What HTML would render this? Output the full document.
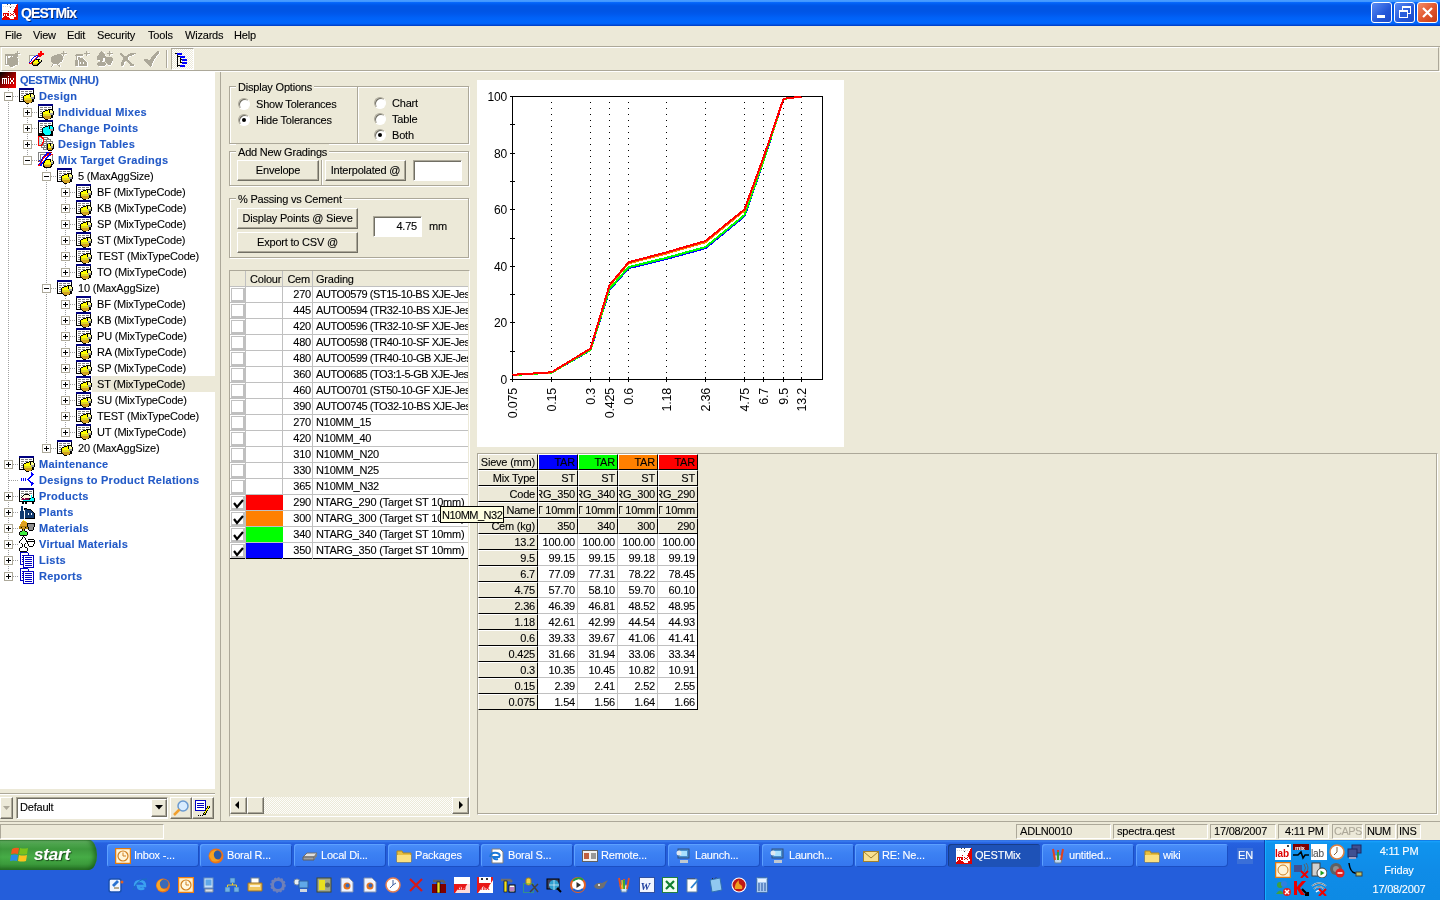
<!DOCTYPE html>
<html><head><meta charset="utf-8"><title>QESTMix</title>
<style>
*{margin:0;padding:0;box-sizing:border-box}
html,body{width:1440px;height:900px;overflow:hidden}
#wrap{position:absolute;left:0;top:0;width:1440px;height:900px;will-change:transform}
body{position:relative;background:#ece9d8;font-family:"Liberation Sans",sans-serif;font-size:11px;color:#000;line-height:16px;letter-spacing:-0.2px;-webkit-text-stroke:0.1px currentColor}
.a{position:absolute}
.t{position:absolute;white-space:nowrap}
/* title bar */
#title{left:0;top:0;width:1440px;height:26px;background:linear-gradient(#4a9dff 0,#3d95ff 2px,#0a6cff 2px,#005ef0 4px,#0055e5 6px,#0055e5 11px,#0058ec 14px,#0062f8 18px,#0066fd 22px,#0062f8 24px,#0046d0 25px,#0040c8 26px)}
.tbtn{top:2px;width:21px;height:21px;border:1px solid #fff;border-radius:3px;background:linear-gradient(135deg,#5a8cf5,#2457d8 60%,#1c4ac8)}
/* menu */
.menu{top:27px}
/* toolbar */
#tb{left:0;top:46px;width:1440px;height:26px;border-top:1px solid #aca899;border-bottom:1px solid #fff;}
#tbin{left:1px;top:47px;width:1438px;height:24px;border-top:1px solid #fff;border-left:1px solid #fff;border-right:1px solid #aca899;border-bottom:1px solid #aca899}
/* tree */
#tree{left:0;top:72px;width:215px;height:717px;background:#fff;overflow:hidden}
.tr{position:absolute;height:16px;white-space:nowrap;line-height:16px}
.b{font-weight:bold;color:#2259c6;letter-spacing:0.25px}
.exp{position:absolute;width:9px;height:9px;border:1px solid #aca899;background:#fff}
.exp::before{content:"";position:absolute;left:1px;top:3px;width:5px;height:1px;background:#000}
.exp.p::after{content:"";position:absolute;left:3px;top:1px;width:1px;height:5px;background:#000}
.dv{position:absolute;width:1px;background-image:linear-gradient(#a0a0a0 50%,transparent 50%);background-size:1px 2px}
.dh{position:absolute;height:1px;background-image:linear-gradient(90deg,#a0a0a0 50%,transparent 50%);background-size:2px 1px}
/* groups */
.grp{position:absolute;border:1px solid #aca899;box-shadow:inset 1px 1px 0 #fff,1px 1px 0 #fff}
.gl{position:absolute;background:#ece9d8;padding:0 2px;line-height:12px}
.btn{position:absolute;background:#ece9d8;border:1px solid;border-color:#fff #716f64 #716f64 #fff;box-shadow:inset -1px -1px 0 #aca899;text-align:center;line-height:18px}
.inp{position:absolute;background:#fff;border:1px solid;border-color:#aca899 #fff #fff #aca899;box-shadow:inset 1px 1px 0 #716f64}
.radio{position:absolute;width:12px;height:12px;border-radius:50%;background:#fff;border:1px solid;border-color:#aca899 #fff #fff #aca899;box-shadow:inset 1px 1px 0 #716f64}
.radio.on::after{content:"";position:absolute;left:3px;top:3px;width:4px;height:4px;border-radius:50%;background:#000}
/* grid */
#grid{left:229px;top:270px;width:240px;height:546px;border:1px solid #aca899;border-right-color:#fff;border-bottom-color:#fff;background:#ece9d8;overflow:hidden}
.gr{position:absolute;left:0;width:239px;height:16px}
.gc{position:absolute;top:0;height:16px;line-height:15px;white-space:nowrap;overflow:hidden}
/* table */
.fx{position:absolute;background:#ece9d8;border-top:1px solid #fff;border-left:1px solid #fff;border-right:1px solid #000;border-bottom:1px solid #000;display:flex;justify-content:flex-end;padding-right:2px;line-height:14px;white-space:nowrap;overflow:hidden}
.dc{position:absolute;background:#fff;border-right:1px solid #c0c0c0;border-bottom:1px solid #c0c0c0;display:flex;justify-content:flex-end;padding-right:2px;line-height:16px;white-space:nowrap;overflow:hidden}
.cl{flex:none}
/* status */
.sp{position:absolute;top:824px;height:15px;border:1px solid;border-color:#aca899 #fff #fff #aca899;line-height:13px;padding-left:4px;white-space:nowrap;overflow:hidden}
/* taskbar */
#task{left:0;top:840px;width:1440px;height:60px;background:linear-gradient(#3168d5 0,#3a80f3 1px,#2661e0 3px,#245edb 8px,#245edb 100%)}
.tk{position:absolute;top:844px;width:92px;height:23px;border-radius:3px;background:linear-gradient(#4b8ef9,#3c81f3 40%,#3576ee);box-shadow:inset 1px 1px 0 #5ca0ff,inset -1px -1px 0 #1b4fc3;color:#fff;font-size:11px;line-height:22px;padding-left:27px;white-space:nowrap;overflow:hidden}
.tk.act{background:#1e52b7;box-shadow:inset 1px 1px 0 #173e8a}
.ico{position:absolute}
</style></head><body><div id="wrap">

<!-- TITLE BAR -->
<div id="title" class="a"></div>
<svg class="a" style="left:2px;top:4px" width="16" height="16"><use href="#tk9"/></svg>
<div class="t" style="left:21px;top:3px;color:#fff;font-size:14px;font-weight:bold;line-height:20px;letter-spacing:-0.9px;text-shadow:1px 1px 0 #0a246a">QESTMix</div>
<div class="a tbtn" style="left:1371px"><div class="a" style="left:5px;top:12px;width:8px;height:3px;background:#fff"></div></div>
<div class="a tbtn" style="left:1394px"><div class="a" style="left:7px;top:3px;width:9px;height:8px;border:1px solid #fff;border-top-width:2px"></div><div class="a" style="left:4px;top:7px;width:9px;height:8px;border:1px solid #fff;border-top-width:2px;background:#2a5fdc"></div></div>
<div class="a tbtn" style="left:1417px;background:linear-gradient(135deg,#f08c6a,#e2582e 50%,#c63b13)"><svg class="a" style="left:3px;top:3px" width="13" height="13"><path d="M2 2 L11 11 M11 2 L2 11" stroke="#fff" stroke-width="2.2"/></svg></div>

<!-- MENU -->
<div class="t menu" style="left:5px">File</div>
<div class="t menu" style="left:33px">View</div>
<div class="t menu" style="left:67px">Edit</div>
<div class="t menu" style="left:97px">Security</div>
<div class="t menu" style="left:148px">Tools</div>
<div class="t menu" style="left:185px">Wizards</div>
<div class="t menu" style="left:234px">Help</div>

<!-- TOOLBAR -->
<div id="tb" class="a"></div>
<div id="tbin" class="a"></div>
<div class="a" style="left:171px;top:48px;width:23px;height:22px;border:1px solid;border-color:#aca899 #fff #fff #aca899;background:repeating-conic-gradient(#fff 0 25%,#ece9d8 0 50%) 0 0/2px 2px"></div>
<svg class="a" style="left:4px;top:50px" width="18" height="18"><use href="#tb_A"/></svg>
<svg class="a" style="left:27px;top:50px" width="18" height="18"><use href="#tb_B"/></svg>
<svg class="a" style="left:50px;top:50px" width="18" height="18"><use href="#tb_C"/></svg>
<svg class="a" style="left:73px;top:50px" width="18" height="18"><use href="#tb_D"/></svg>
<svg class="a" style="left:96px;top:50px" width="18" height="18"><use href="#tb_E"/></svg>
<svg class="a" style="left:119px;top:50px" width="18" height="18"><use href="#tb_F"/></svg>
<svg class="a" style="left:142px;top:50px" width="18" height="18"><use href="#tb_G"/></svg>
<svg class="a" style="left:172px;top:49px" width="20" height="20"><use href="#tb_tree"/></svg>
<div class="a" style="left:166px;top:50px;width:1px;height:18px;background:#aca899;box-shadow:1px 0 0 #fff"></div>
<svg width="0" height="0" style="position:absolute"><defs><symbol id="tb_A" viewBox="0 0 18 18" shape-rendering="crispEdges"><path d="M13 1h1v1h-1zM13 2h1v1h-1zM11 3h5v1h-5zM1 4h13v1h-13zM1 5h13v1h-13zM1 6h1v1h-1zM3 6h1v1h-1zM7 6h1v1h-1zM9 6h5v1h-5zM1 7h1v1h-1zM3 7h1v1h-1zM6 7h7v1h-7zM1 8h1v1h-1zM3 8h11v1h-11zM1 9h1v1h-1zM3 9h11v1h-11zM1 10h1v1h-1zM3 10h11v1h-11zM1 11h1v1h-1zM3 11h11v1h-11zM1 12h1v1h-1zM3 12h11v1h-11zM1 13h1v1h-1zM3 13h11v1h-11zM1 14h13v1h-13zM5 15h6v1h-6zM6 16h3v1h-3z" fill="#aca899"/><path d="M14 2h1v1h-1zM14 4h3v1h-3zM2 6h1v1h-1zM4 6h3v1h-3zM8 6h1v1h-1zM2 7h1v1h-1zM4 7h2v1h-2zM13 7h1v1h-1zM2 8h1v1h-1zM2 9h1v1h-1zM14 9h1v1h-1zM2 10h1v1h-1zM14 10h1v1h-1zM2 11h1v1h-1zM2 12h1v1h-1zM14 12h1v1h-1zM2 13h1v1h-1zM14 13h1v1h-1zM14 14h1v1h-1zM1 15h4v1h-4zM11 15h2v1h-2zM9 16h2v1h-2zM7 17h3v1h-3z" fill="#ffffff"/></symbol><symbol id="tb_B" viewBox="0 0 18 18" shape-rendering="crispEdges"><path d="M13 1h2v1h-2zM13 2h2v1h-2zM11 3h6v1h-6zM11 4h6v1h-6zM11 5h4v1h-4zM10 6h1v1h-1zM12 6h2v1h-2zM9 7h1v1h-1zM8 8h1v1h-1zM7 9h1v1h-1zM6 10h1v1h-1zM5 11h1v1h-1zM4 12h1v1h-1zM2 13h3v1h-3z" fill="#ff0000"/><path d="M2 5h7v1h-7zM2 6h1v1h-1zM2 7h1v1h-1zM2 8h1v1h-1zM2 9h1v1h-1zM2 10h1v1h-1zM2 11h1v1h-1z" fill="#aca899"/><path d="M9 5h2v1h-2zM7 6h2v1h-2zM11 6h1v1h-1zM6 7h1v1h-1zM10 7h1v1h-1zM5 8h1v1h-1zM9 8h1v1h-1zM4 9h1v1h-1zM8 9h1v1h-1zM4 10h1v1h-1zM3 11h1v1h-1zM2 12h1v1h-1z" fill="#0000ff"/><path d="M3 6h4v1h-4zM9 6h1v1h-1zM3 7h3v1h-3zM7 7h2v1h-2zM11 7h1v1h-1zM3 8h2v1h-2zM6 8h2v1h-2zM10 8h1v1h-1zM3 9h1v1h-1zM5 9h2v1h-2zM3 10h1v1h-1zM5 10h1v1h-1zM4 11h1v1h-1zM3 12h1v1h-1z" fill="#ffffff"/><path d="M9 9h4v1h-4zM7 10h1v1h-1zM11 10h1v1h-1zM14 10h1v1h-1zM6 11h1v1h-1zM11 11h1v1h-1zM14 11h1v1h-1zM5 12h1v1h-1zM12 12h2v1h-2zM5 13h1v1h-1zM11 13h2v1h-2zM5 14h1v1h-1zM10 14h2v1h-2zM6 15h5v1h-5z" fill="#000000"/><path d="M8 10h3v1h-3zM7 11h4v1h-4zM6 12h6v1h-6z" fill="#ffff00"/><path d="M12 10h2v1h-2z" fill="#ffff90"/><path d="M12 11h2v1h-2z" fill="#a0a0a0"/><path d="M6 13h5v1h-5z" fill="#e0d820"/><path d="M6 14h4v1h-4z" fill="#d0a020"/></symbol><symbol id="tb_C" viewBox="0 0 18 18" shape-rendering="crispEdges"><path d="M13 1h1v1h-1zM13 2h1v1h-1zM11 3h6v1h-6zM7 4h4v1h-4zM13 4h1v1h-1zM4 5h8v1h-8zM13 5h1v1h-1zM2 6h11v1h-11zM1 7h12v1h-12zM1 8h12v1h-12zM1 9h12v1h-12zM1 10h11v1h-11zM1 11h11v1h-11zM2 12h8v1h-8zM3 13h6v1h-6zM2 14h1v1h-1zM7 14h1v1h-1zM2 15h1v1h-1zM8 15h2v1h-2zM1 16h1v1h-1zM9 16h1v1h-1z" fill="#aca899"/><path d="M15 2h1v1h-1zM15 4h2v1h-2zM12 5h1v1h-1zM14 5h1v1h-1zM13 7h1v1h-1zM13 9h1v1h-1zM12 10h1v1h-1zM12 11h1v1h-1zM10 12h2v1h-2zM9 13h1v1h-1zM3 14h4v1h-4zM8 14h1v1h-1zM3 15h1v1h-1zM10 15h1v1h-1zM2 16h1v1h-1zM10 16h1v1h-1z" fill="#ffffff"/></symbol><symbol id="tb_D" viewBox="0 0 18 18" shape-rendering="crispEdges"><path d="M13 1h1v1h-1zM13 2h1v1h-1zM11 3h6v1h-6zM3 4h7v1h-7zM13 4h1v1h-1zM2 5h8v1h-8zM13 5h1v1h-1zM3 6h1v1h-1zM3 7h1v1h-1zM5 7h2v1h-2zM3 8h1v1h-1zM5 8h5v1h-5zM3 9h1v1h-1zM5 9h6v1h-6zM2 10h3v1h-3zM6 10h6v1h-6zM2 11h3v1h-3zM6 11h7v1h-7zM2 12h3v1h-3zM6 12h1v1h-1zM8 12h2v1h-2zM11 12h3v1h-3zM2 13h3v1h-3zM6 13h1v1h-1zM8 13h2v1h-2zM11 13h3v1h-3zM2 14h3v1h-3zM6 14h8v1h-8zM2 15h3v1h-3zM6 15h8v1h-8z" fill="#aca899"/><path d="M15 2h1v1h-1zM15 4h2v1h-2zM10 5h1v1h-1zM14 5h1v1h-1zM4 6h6v1h-6zM4 7h1v1h-1zM7 7h1v1h-1zM4 8h1v1h-1zM10 8h1v1h-1zM4 9h1v1h-1zM11 9h1v1h-1zM5 10h1v1h-1zM12 10h1v1h-1zM5 11h1v1h-1zM13 11h1v1h-1zM5 12h1v1h-1zM7 12h1v1h-1zM10 12h1v1h-1zM14 12h1v1h-1zM5 13h1v1h-1zM7 13h1v1h-1zM10 13h1v1h-1zM14 13h1v1h-1zM5 14h1v1h-1zM14 14h1v1h-1zM5 15h1v1h-1zM14 15h1v1h-1zM3 16h12v1h-12z" fill="#ffffff"/></symbol><symbol id="tb_E" viewBox="0 0 18 18" shape-rendering="crispEdges"><path d="M5 1h1v1h-1zM13 1h1v1h-1zM4 2h3v1h-3zM13 2h1v1h-1zM3 3h5v1h-5zM11 3h6v1h-6zM3 4h6v1h-6zM13 4h1v1h-1zM2 5h7v1h-7zM13 5h1v1h-1zM1 6h9v1h-9zM1 7h15v1h-15zM1 8h6v1h-6zM9 8h8v1h-8zM1 9h6v1h-6zM9 9h8v1h-8zM4 10h3v1h-3zM9 10h8v1h-8zM4 11h2v1h-2zM9 11h7v1h-7zM2 12h7v1h-7zM10 12h6v1h-6zM1 13h9v1h-9zM11 13h4v1h-4zM1 14h9v1h-9zM12 14h3v1h-3zM2 15h7v1h-7z" fill="#aca899"/><path d="M8 2h1v1h-1zM15 2h1v1h-1zM15 4h2v1h-2zM9 5h1v1h-1zM14 5h1v1h-1zM7 8h2v1h-2zM7 9h2v1h-2zM2 10h2v1h-2zM7 10h2v1h-2zM6 11h2v1h-2zM16 11h1v1h-1zM16 12h1v1h-1zM15 13h1v1h-1zM10 14h1v1h-1zM15 14h1v1h-1zM9 15h1v1h-1zM12 15h3v1h-3zM3 16h6v1h-6z" fill="#ffffff"/></symbol><symbol id="tb_F" viewBox="0 0 18 18" shape-rendering="crispEdges"><path d="M1 3h2v1h-2zM11 3h6v1h-6zM1 4h3v1h-3zM9 4h6v1h-6zM2 5h3v1h-3zM8 5h5v1h-5zM3 6h7v1h-7zM4 7h5v1h-5zM4 8h5v1h-5zM4 9h5v1h-5zM3 10h7v1h-7zM3 11h3v1h-3zM8 11h3v1h-3zM2 12h3v1h-3zM9 12h3v1h-3zM2 13h3v1h-3zM10 13h3v1h-3zM2 14h3v1h-3zM11 14h4v1h-4zM2 15h2v1h-2zM11 15h4v1h-4z" fill="#aca899"/><path d="M15 4h1v1h-1zM13 5h2v1h-2zM10 6h2v1h-2zM9 7h1v1h-1zM9 8h1v1h-1zM9 9h1v1h-1zM5 12h2v1h-2zM5 13h1v1h-1zM5 14h1v1h-1zM4 15h1v1h-1zM15 15h1v1h-1zM3 16h2v1h-2zM11 16h4v1h-4z" fill="#ffffff"/></symbol><symbol id="tb_G" viewBox="0 0 18 18" shape-rendering="crispEdges"><path d="M15 1h2v1h-2zM14 2h3v1h-3zM13 3h4v1h-4zM12 4h4v1h-4zM11 5h4v1h-4zM10 6h4v1h-4zM9 7h5v1h-5zM9 8h4v1h-4zM2 9h4v1h-4zM8 9h4v1h-4zM2 10h10v1h-10zM3 11h8v1h-8zM4 12h7v1h-7zM5 13h5v1h-5zM6 14h4v1h-4zM7 15h3v1h-3zM8 16h1v1h-1z" fill="#aca899"/><path d="M17 2h1v1h-1zM17 3h1v1h-1zM16 4h1v1h-1zM15 5h1v1h-1zM14 6h1v1h-1zM14 7h1v1h-1zM13 8h1v1h-1zM12 9h1v1h-1zM12 10h1v1h-1zM11 11h1v1h-1zM11 12h1v1h-1zM10 13h1v1h-1zM10 14h1v1h-1zM10 15h1v1h-1zM9 16h1v1h-1z" fill="#ffffff"/></symbol><symbol id="tb_tree" viewBox="0 0 20 20" shape-rendering="crispEdges"><path d="M3 4h2v1h-2zM5 6h1v1h-1zM5 7h3v1h-3zM5 8h1v1h-1zM5 9h1v1h-1zM8 9h1v1h-1zM5 10h1v1h-1zM8 10h2v1h-2zM5 11h1v1h-1zM8 11h1v1h-1zM5 12h1v1h-1zM8 12h1v1h-1zM5 13h1v1h-1zM8 13h2v1h-2zM5 14h1v1h-1zM5 15h1v1h-1zM5 16h3v1h-3zM5 17h1v1h-1z" fill="#000000"/><path d="M5 4h5v1h-5zM5 5h5v1h-5zM8 7h5v1h-5zM8 8h5v1h-5zM10 10h5v1h-5zM10 11h5v1h-5zM10 13h5v1h-5zM10 14h5v1h-5zM8 16h5v1h-5zM8 17h5v1h-5z" fill="#0000ff"/></symbol></defs></svg>

<!-- TREE -->
<div id="tree" class="a">
<div class="dv" style="left:8px;top:16px;height:488px"></div>
<div class="dv" style="left:27px;top:32px;height:56px"></div>
<div class="dv" style="left:46px;top:96px;height:280px"></div>
<div class="dv" style="left:65px;top:112px;height:88px"></div>
<div class="dv" style="left:65px;top:224px;height:136px"></div>
<div class="dh" style="left:9px;top:24px;width:10px"></div>
<div class="dh" style="left:28px;top:40px;width:10px"></div>
<div class="dh" style="left:28px;top:56px;width:10px"></div>
<div class="dh" style="left:28px;top:72px;width:10px"></div>
<div class="dh" style="left:28px;top:88px;width:10px"></div>
<div class="dh" style="left:47px;top:104px;width:10px"></div>
<div class="dh" style="left:66px;top:120px;width:10px"></div>
<div class="dh" style="left:66px;top:136px;width:10px"></div>
<div class="dh" style="left:66px;top:152px;width:10px"></div>
<div class="dh" style="left:66px;top:168px;width:10px"></div>
<div class="dh" style="left:66px;top:184px;width:10px"></div>
<div class="dh" style="left:66px;top:200px;width:10px"></div>
<div class="dh" style="left:47px;top:216px;width:10px"></div>
<div class="dh" style="left:66px;top:232px;width:10px"></div>
<div class="dh" style="left:66px;top:248px;width:10px"></div>
<div class="dh" style="left:66px;top:264px;width:10px"></div>
<div class="dh" style="left:66px;top:280px;width:10px"></div>
<div class="dh" style="left:66px;top:296px;width:10px"></div>
<div class="dh" style="left:66px;top:312px;width:10px"></div>
<div class="dh" style="left:66px;top:328px;width:10px"></div>
<div class="dh" style="left:66px;top:344px;width:10px"></div>
<div class="dh" style="left:66px;top:360px;width:10px"></div>
<div class="dh" style="left:47px;top:376px;width:10px"></div>
<div class="dh" style="left:9px;top:392px;width:10px"></div>
<div class="dh" style="left:9px;top:408px;width:10px"></div>
<div class="dh" style="left:9px;top:424px;width:10px"></div>
<div class="dh" style="left:9px;top:440px;width:10px"></div>
<div class="dh" style="left:9px;top:456px;width:10px"></div>
<div class="dh" style="left:9px;top:472px;width:10px"></div>
<div class="dh" style="left:9px;top:488px;width:10px"></div>
<div class="dh" style="left:9px;top:504px;width:10px"></div>
<svg class="a" style="left:0px;top:0px" width="16" height="16"><use href="#i_mix"/></svg>
<div class="tr b" style="left:20px;top:0px;letter-spacing:-0.3px">QESTMix (NHU)</div>
<div class="exp" style="left:4px;top:20px"></div>
<svg class="a" style="left:19px;top:16px" width="16" height="16"><use href="#i_db"/></svg>
<div class="tr b" style="left:39px;top:16px">Design</div>
<div class="exp p" style="left:23px;top:36px"></div>
<svg class="a" style="left:38px;top:32px" width="16" height="16"><use href="#i_db"/></svg>
<div class="tr b" style="left:58px;top:32px">Individual Mixes</div>
<div class="exp p" style="left:23px;top:52px"></div>
<svg class="a" style="left:38px;top:48px" width="16" height="16"><use href="#i_dbc"/></svg>
<div class="tr b" style="left:58px;top:48px">Change Points</div>
<div class="exp p" style="left:23px;top:68px"></div>
<svg class="a" style="left:38px;top:64px" width="16" height="16"><use href="#i_dt"/></svg>
<div class="tr b" style="left:58px;top:64px">Design Tables</div>
<div class="exp" style="left:23px;top:84px"></div>
<svg class="a" style="left:38px;top:80px" width="16" height="16"><use href="#i_mtg"/></svg>
<div class="tr b" style="left:58px;top:80px">Mix Target Gradings</div>
<div class="exp" style="left:42px;top:100px"></div>
<svg class="a" style="left:57px;top:96px" width="16" height="16"><use href="#i_db"/></svg>
<div class="tr" style="left:78px;top:96px">5 (MaxAggSize)</div>
<div class="exp p" style="left:61px;top:116px"></div>
<svg class="a" style="left:76px;top:112px" width="16" height="16"><use href="#i_db"/></svg>
<div class="tr" style="left:97px;top:112px">BF (MixTypeCode)</div>
<div class="exp p" style="left:61px;top:132px"></div>
<svg class="a" style="left:76px;top:128px" width="16" height="16"><use href="#i_db"/></svg>
<div class="tr" style="left:97px;top:128px">KB (MixTypeCode)</div>
<div class="exp p" style="left:61px;top:148px"></div>
<svg class="a" style="left:76px;top:144px" width="16" height="16"><use href="#i_db"/></svg>
<div class="tr" style="left:97px;top:144px">SP (MixTypeCode)</div>
<div class="exp p" style="left:61px;top:164px"></div>
<svg class="a" style="left:76px;top:160px" width="16" height="16"><use href="#i_db"/></svg>
<div class="tr" style="left:97px;top:160px">ST (MixTypeCode)</div>
<div class="exp p" style="left:61px;top:180px"></div>
<svg class="a" style="left:76px;top:176px" width="16" height="16"><use href="#i_db"/></svg>
<div class="tr" style="left:97px;top:176px">TEST (MixTypeCode)</div>
<div class="exp p" style="left:61px;top:196px"></div>
<svg class="a" style="left:76px;top:192px" width="16" height="16"><use href="#i_db"/></svg>
<div class="tr" style="left:97px;top:192px">TO (MixTypeCode)</div>
<div class="exp" style="left:42px;top:212px"></div>
<svg class="a" style="left:57px;top:208px" width="16" height="16"><use href="#i_db"/></svg>
<div class="tr" style="left:78px;top:208px">10 (MaxAggSize)</div>
<div class="exp p" style="left:61px;top:228px"></div>
<svg class="a" style="left:76px;top:224px" width="16" height="16"><use href="#i_db"/></svg>
<div class="tr" style="left:97px;top:224px">BF (MixTypeCode)</div>
<div class="exp p" style="left:61px;top:244px"></div>
<svg class="a" style="left:76px;top:240px" width="16" height="16"><use href="#i_db"/></svg>
<div class="tr" style="left:97px;top:240px">KB (MixTypeCode)</div>
<div class="exp p" style="left:61px;top:260px"></div>
<svg class="a" style="left:76px;top:256px" width="16" height="16"><use href="#i_db"/></svg>
<div class="tr" style="left:97px;top:256px">PU (MixTypeCode)</div>
<div class="exp p" style="left:61px;top:276px"></div>
<svg class="a" style="left:76px;top:272px" width="16" height="16"><use href="#i_db"/></svg>
<div class="tr" style="left:97px;top:272px">RA (MixTypeCode)</div>
<div class="exp p" style="left:61px;top:292px"></div>
<svg class="a" style="left:76px;top:288px" width="16" height="16"><use href="#i_db"/></svg>
<div class="tr" style="left:97px;top:288px">SP (MixTypeCode)</div>
<div class="exp p" style="left:61px;top:308px"></div>
<svg class="a" style="left:76px;top:304px" width="16" height="16"><use href="#i_db"/></svg>
<div class="a" style="left:92px;top:304px;width:123px;height:16px;background:#ece9d8"></div>
<div class="tr" style="left:97px;top:304px">ST (MixTypeCode)</div>
<div class="exp p" style="left:61px;top:324px"></div>
<svg class="a" style="left:76px;top:320px" width="16" height="16"><use href="#i_db"/></svg>
<div class="tr" style="left:97px;top:320px">SU (MixTypeCode)</div>
<div class="exp p" style="left:61px;top:340px"></div>
<svg class="a" style="left:76px;top:336px" width="16" height="16"><use href="#i_db"/></svg>
<div class="tr" style="left:97px;top:336px">TEST (MixTypeCode)</div>
<div class="exp p" style="left:61px;top:356px"></div>
<svg class="a" style="left:76px;top:352px" width="16" height="16"><use href="#i_db"/></svg>
<div class="tr" style="left:97px;top:352px">UT (MixTypeCode)</div>
<div class="exp p" style="left:42px;top:372px"></div>
<svg class="a" style="left:57px;top:368px" width="16" height="16"><use href="#i_db"/></svg>
<div class="tr" style="left:78px;top:368px">20 (MaxAggSize)</div>
<div class="exp p" style="left:4px;top:388px"></div>
<svg class="a" style="left:19px;top:384px" width="16" height="16"><use href="#i_db"/></svg>
<div class="tr b" style="left:39px;top:384px">Maintenance</div>
<svg class="a" style="left:19px;top:400px" width="16" height="16"><use href="#i_rel"/></svg>
<div class="tr b" style="left:39px;top:400px">Designs to Product Relations</div>
<div class="exp p" style="left:4px;top:420px"></div>
<svg class="a" style="left:19px;top:416px" width="16" height="16"><use href="#i_prod"/></svg>
<div class="tr b" style="left:39px;top:416px">Products</div>
<div class="exp p" style="left:4px;top:436px"></div>
<svg class="a" style="left:19px;top:432px" width="16" height="16"><use href="#i_plant"/></svg>
<div class="tr b" style="left:39px;top:432px">Plants</div>
<div class="exp p" style="left:4px;top:452px"></div>
<svg class="a" style="left:19px;top:448px" width="16" height="16"><use href="#i_mat"/></svg>
<div class="tr b" style="left:39px;top:448px">Materials</div>
<div class="exp p" style="left:4px;top:468px"></div>
<svg class="a" style="left:19px;top:464px" width="16" height="16"><use href="#i_vmat"/></svg>
<div class="tr b" style="left:39px;top:464px">Virtual Materials</div>
<div class="exp p" style="left:4px;top:484px"></div>
<svg class="a" style="left:19px;top:480px" width="16" height="16"><use href="#i_list"/></svg>
<div class="tr b" style="left:39px;top:480px">Lists</div>
<div class="exp p" style="left:4px;top:500px"></div>
<svg class="a" style="left:19px;top:496px" width="16" height="16"><use href="#i_list"/></svg>
<div class="tr b" style="left:39px;top:496px">Reports</div>
</div>



<!-- SPLITTER -->
<div class="a" style="left:220px;top:72px;width:1px;height:749px;background:#aca899"></div>
<div class="a" style="left:0;top:821px;width:1440px;height:1px;background:#aca899"></div>

<!-- Display Options -->
<div class="grp" style="left:229px;top:86px;width:240px;height:58px"></div>
<div class="a" style="left:357px;top:87px;width:1px;height:56px;background:#aca899;box-shadow:1px 0 0 #fff"></div>
<div class="gl t" style="left:236px;top:79px;line-height:16px">Display Options</div>
<div class="radio" style="left:238px;top:98px"></div><div class="t" style="left:256px;top:96px">Show Tolerances</div>
<div class="radio on" style="left:238px;top:114px"></div><div class="t" style="left:256px;top:112px">Hide Tolerances</div>
<div class="radio" style="left:374px;top:97px"></div><div class="t" style="left:392px;top:95px">Chart</div>
<div class="radio" style="left:374px;top:113px"></div><div class="t" style="left:392px;top:111px">Table</div>
<div class="radio on" style="left:374px;top:129px"></div><div class="t" style="left:392px;top:127px">Both</div>
<!-- Add New Gradings -->
<div class="grp" style="left:229px;top:151px;width:240px;height:35px"></div>
<div class="a" style="left:321px;top:152px;width:1px;height:33px;background:#aca899;box-shadow:1px 0 0 #fff"></div>
<div class="gl t" style="left:236px;top:144px;line-height:16px">Add New Gradings</div>
<div class="btn" style="left:237px;top:160px;width:82px;height:21px">Envelope</div>
<div class="btn" style="left:325px;top:160px;width:81px;height:21px">Interpolated @</div>
<div class="inp" style="left:413px;top:160px;width:49px;height:21px"></div>
<!-- % Passing -->
<div class="grp" style="left:229px;top:198px;width:240px;height:60px"></div>
<div class="gl t" style="left:236px;top:191px;line-height:16px">% Passing vs Cement</div>
<div class="btn" style="left:237px;top:208px;width:121px;height:21px">Display Points @ Sieve</div>
<div class="btn" style="left:237px;top:232px;width:121px;height:21px">Export to CSV @</div>
<div class="inp" style="left:373px;top:216px;width:49px;height:21px;text-align:right;padding-right:4px;line-height:18px">4.75</div>
<div class="t" style="left:429px;top:218px">mm</div>


<div class="a" style="left:229px;top:270px;width:241px;height:547px;border:1px solid #aca899;border-right-color:#fff;border-bottom-color:#fff;background:#ece9d8"></div>
<div class="a" style="left:230px;top:271px;width:239px;height:545px;border:1px solid #716f64;border-right-color:#ece9d8;border-bottom-color:#ece9d8;border-width:0"></div>
<div class="a" style="left:230px;top:271px;width:238px;height:15px;background:#ece9d8"></div>
<div class="a" style="left:230px;top:287px;width:238px;height:271px;background:#fff"></div>
<div class="a" style="left:230px;top:286px;width:238px;height:1px;background:#c0c0c0"></div>
<div class="a" style="left:230px;top:302px;width:238px;height:1px;background:#c0c0c0"></div>
<div class="a" style="left:230px;top:318px;width:238px;height:1px;background:#c0c0c0"></div>
<div class="a" style="left:230px;top:334px;width:238px;height:1px;background:#c0c0c0"></div>
<div class="a" style="left:230px;top:350px;width:238px;height:1px;background:#c0c0c0"></div>
<div class="a" style="left:230px;top:366px;width:238px;height:1px;background:#c0c0c0"></div>
<div class="a" style="left:230px;top:382px;width:238px;height:1px;background:#c0c0c0"></div>
<div class="a" style="left:230px;top:398px;width:238px;height:1px;background:#c0c0c0"></div>
<div class="a" style="left:230px;top:414px;width:238px;height:1px;background:#c0c0c0"></div>
<div class="a" style="left:230px;top:430px;width:238px;height:1px;background:#c0c0c0"></div>
<div class="a" style="left:230px;top:446px;width:238px;height:1px;background:#c0c0c0"></div>
<div class="a" style="left:230px;top:462px;width:238px;height:1px;background:#c0c0c0"></div>
<div class="a" style="left:230px;top:478px;width:238px;height:1px;background:#c0c0c0"></div>
<div class="a" style="left:230px;top:494px;width:238px;height:1px;background:#c0c0c0"></div>
<div class="a" style="left:230px;top:510px;width:238px;height:1px;background:#c0c0c0"></div>
<div class="a" style="left:230px;top:526px;width:238px;height:1px;background:#c0c0c0"></div>
<div class="a" style="left:230px;top:542px;width:238px;height:1px;background:#c0c0c0"></div>
<div class="a" style="left:230px;top:558px;width:238px;height:1px;background:#c0c0c0"></div>
<div class="a" style="left:230px;top:558px;width:238px;height:1px;background:#000"></div>
<div class="a" style="left:245px;top:271px;width:1px;height:288px;background:#c0c0c0"></div>
<div class="a" style="left:282px;top:271px;width:1px;height:288px;background:#c0c0c0"></div>
<div class="a" style="left:312px;top:271px;width:1px;height:288px;background:#c0c0c0"></div>
<div class="t" style="left:250px;top:271px">Colour</div>
<div class="t" style="left:282px;top:271px;width:28px;text-align:right">Cem</div>
<div class="t" style="left:316px;top:271px">Grading</div>
<div class="a" style="left:231px;top:288px;width:14px;height:14px;border:1px solid #c0c0c0;border-right-width:2px;border-bottom-width:2px;background:#fff"></div>
<div class="t" style="left:283px;top:286px;width:28px;text-align:right">270</div>
<div class="t" style="left:316px;top:286px;width:152px;overflow:hidden;letter-spacing:-0.45px;">AUTO0579 (ST15-10-BS XJE-Jesse)</div>
<div class="a" style="left:231px;top:304px;width:14px;height:14px;border:1px solid #c0c0c0;border-right-width:2px;border-bottom-width:2px;background:#fff"></div>
<div class="t" style="left:283px;top:302px;width:28px;text-align:right">445</div>
<div class="t" style="left:316px;top:302px;width:152px;overflow:hidden;letter-spacing:-0.45px;">AUTO0594 (TR32-10-BS XJE-Jesse)</div>
<div class="a" style="left:231px;top:320px;width:14px;height:14px;border:1px solid #c0c0c0;border-right-width:2px;border-bottom-width:2px;background:#fff"></div>
<div class="t" style="left:283px;top:318px;width:28px;text-align:right">420</div>
<div class="t" style="left:316px;top:318px;width:152px;overflow:hidden;letter-spacing:-0.45px;">AUTO0596 (TR32-10-SF XJE-Jesse)</div>
<div class="a" style="left:231px;top:336px;width:14px;height:14px;border:1px solid #c0c0c0;border-right-width:2px;border-bottom-width:2px;background:#fff"></div>
<div class="t" style="left:283px;top:334px;width:28px;text-align:right">480</div>
<div class="t" style="left:316px;top:334px;width:152px;overflow:hidden;letter-spacing:-0.45px;">AUTO0598 (TR40-10-SF XJE-Jesse)</div>
<div class="a" style="left:231px;top:352px;width:14px;height:14px;border:1px solid #c0c0c0;border-right-width:2px;border-bottom-width:2px;background:#fff"></div>
<div class="t" style="left:283px;top:350px;width:28px;text-align:right">480</div>
<div class="t" style="left:316px;top:350px;width:152px;overflow:hidden;letter-spacing:-0.45px;">AUTO0599 (TR40-10-GB XJE-Jesse)</div>
<div class="a" style="left:231px;top:368px;width:14px;height:14px;border:1px solid #c0c0c0;border-right-width:2px;border-bottom-width:2px;background:#fff"></div>
<div class="t" style="left:283px;top:366px;width:28px;text-align:right">360</div>
<div class="t" style="left:316px;top:366px;width:152px;overflow:hidden;letter-spacing:-0.45px;">AUTO0685 (TO3:1-5-GB XJE-Jesse)</div>
<div class="a" style="left:231px;top:384px;width:14px;height:14px;border:1px solid #c0c0c0;border-right-width:2px;border-bottom-width:2px;background:#fff"></div>
<div class="t" style="left:283px;top:382px;width:28px;text-align:right">460</div>
<div class="t" style="left:316px;top:382px;width:152px;overflow:hidden;letter-spacing:-0.45px;">AUTO0701 (ST50-10-GF XJE-Jesse)</div>
<div class="a" style="left:231px;top:400px;width:14px;height:14px;border:1px solid #c0c0c0;border-right-width:2px;border-bottom-width:2px;background:#fff"></div>
<div class="t" style="left:283px;top:398px;width:28px;text-align:right">390</div>
<div class="t" style="left:316px;top:398px;width:152px;overflow:hidden;letter-spacing:-0.45px;">AUTO0745 (TO32-10-BS XJE-Jesse)</div>
<div class="a" style="left:231px;top:416px;width:14px;height:14px;border:1px solid #c0c0c0;border-right-width:2px;border-bottom-width:2px;background:#fff"></div>
<div class="t" style="left:283px;top:414px;width:28px;text-align:right">270</div>
<div class="t" style="left:316px;top:414px;width:152px;overflow:hidden;">N10MM_15</div>
<div class="a" style="left:231px;top:432px;width:14px;height:14px;border:1px solid #c0c0c0;border-right-width:2px;border-bottom-width:2px;background:#fff"></div>
<div class="t" style="left:283px;top:430px;width:28px;text-align:right">420</div>
<div class="t" style="left:316px;top:430px;width:152px;overflow:hidden;">N10MM_40</div>
<div class="a" style="left:231px;top:448px;width:14px;height:14px;border:1px solid #c0c0c0;border-right-width:2px;border-bottom-width:2px;background:#fff"></div>
<div class="t" style="left:283px;top:446px;width:28px;text-align:right">310</div>
<div class="t" style="left:316px;top:446px;width:152px;overflow:hidden;">N10MM_N20</div>
<div class="a" style="left:231px;top:464px;width:14px;height:14px;border:1px solid #c0c0c0;border-right-width:2px;border-bottom-width:2px;background:#fff"></div>
<div class="t" style="left:283px;top:462px;width:28px;text-align:right">330</div>
<div class="t" style="left:316px;top:462px;width:152px;overflow:hidden;">N10MM_N25</div>
<div class="a" style="left:231px;top:480px;width:14px;height:14px;border:1px solid #c0c0c0;border-right-width:2px;border-bottom-width:2px;background:#fff"></div>
<div class="t" style="left:283px;top:478px;width:28px;text-align:right">365</div>
<div class="t" style="left:316px;top:478px;width:152px;overflow:hidden;">N10MM_N32</div>
<div class="a" style="left:231px;top:496px;width:14px;height:14px;border:1px solid #c0c0c0;border-right-width:2px;border-bottom-width:2px;background:#fff"></div>
<svg class="a" style="left:233px;top:498px" width="11" height="11"><path d="M1 5 L4 9 L10 2" stroke="#000" stroke-width="2.2" fill="none"/></svg>
<div class="a" style="left:246px;top:495px;width:37px;height:15px;background:#ff0000"></div>
<div class="t" style="left:283px;top:494px;width:28px;text-align:right">290</div>
<div class="t" style="left:316px;top:494px;width:152px;overflow:hidden;">NTARG_290 (Target ST 10mm)</div>
<div class="a" style="left:231px;top:512px;width:14px;height:14px;border:1px solid #c0c0c0;border-right-width:2px;border-bottom-width:2px;background:#fff"></div>
<svg class="a" style="left:233px;top:514px" width="11" height="11"><path d="M1 5 L4 9 L10 2" stroke="#000" stroke-width="2.2" fill="none"/></svg>
<div class="a" style="left:246px;top:511px;width:37px;height:15px;background:#ff8000"></div>
<div class="t" style="left:283px;top:510px;width:28px;text-align:right">300</div>
<div class="t" style="left:316px;top:510px;width:152px;overflow:hidden;">NTARG_300 (Target ST 10mm)</div>
<div class="a" style="left:231px;top:528px;width:14px;height:14px;border:1px solid #c0c0c0;border-right-width:2px;border-bottom-width:2px;background:#fff"></div>
<svg class="a" style="left:233px;top:530px" width="11" height="11"><path d="M1 5 L4 9 L10 2" stroke="#000" stroke-width="2.2" fill="none"/></svg>
<div class="a" style="left:246px;top:527px;width:37px;height:15px;background:#00ff00"></div>
<div class="t" style="left:283px;top:526px;width:28px;text-align:right">340</div>
<div class="t" style="left:316px;top:526px;width:152px;overflow:hidden;">NTARG_340 (Target ST 10mm)</div>
<div class="a" style="left:231px;top:544px;width:14px;height:14px;border:1px solid #c0c0c0;border-right-width:2px;border-bottom-width:2px;background:#fff"></div>
<svg class="a" style="left:233px;top:546px" width="11" height="11"><path d="M1 5 L4 9 L10 2" stroke="#000" stroke-width="2.2" fill="none"/></svg>
<div class="a" style="left:246px;top:543px;width:37px;height:15px;background:#0000ff"></div>
<div class="t" style="left:283px;top:542px;width:28px;text-align:right">350</div>
<div class="t" style="left:316px;top:542px;width:152px;overflow:hidden;">NTARG_350 (Target ST 10mm)</div>
<div class="a" style="left:230px;top:797px;width:238px;height:17px;background:repeating-conic-gradient(#fdfdfb 0 25%,#ece9d8 0 50%) 0 0/2px 2px"></div>
<div class="btn" style="left:230px;top:797px;width:17px;height:17px"></div>
<svg class="a" style="left:235px;top:801px" width="6" height="9"><path d="M4 0 L0 4 L4 8 Z" fill="#000"/></svg>
<div class="btn" style="left:452px;top:797px;width:17px;height:17px"></div>
<svg class="a" style="left:459px;top:801px" width="6" height="9"><path d="M0 0 L4 4 L0 8 Z" fill="#000"/></svg>
<div class="btn" style="left:247px;top:797px;width:17px;height:17px"></div>

<svg class="a" style="left:477px;top:80px" width="367" height="367" viewBox="477 80 367 367" font-family="Liberation Sans" font-size="11">
<rect x="477" y="80" width="367" height="367" fill="#fff"/>
<path d="M551 102h1v1h-1zM551 108h1v1h-1zM551 114h1v1h-1zM551 120h1v1h-1zM551 126h1v1h-1zM551 132h1v1h-1zM551 138h1v1h-1zM551 144h1v1h-1zM551 150h1v1h-1zM551 156h1v1h-1zM551 162h1v1h-1zM551 168h1v1h-1zM551 174h1v1h-1zM551 180h1v1h-1zM551 186h1v1h-1zM551 192h1v1h-1zM551 198h1v1h-1zM551 204h1v1h-1zM551 210h1v1h-1zM551 216h1v1h-1zM551 222h1v1h-1zM551 228h1v1h-1zM551 234h1v1h-1zM551 240h1v1h-1zM551 246h1v1h-1zM551 252h1v1h-1zM551 258h1v1h-1zM551 264h1v1h-1zM551 270h1v1h-1zM551 276h1v1h-1zM551 282h1v1h-1zM551 288h1v1h-1zM551 294h1v1h-1zM551 300h1v1h-1zM551 306h1v1h-1zM551 312h1v1h-1zM551 318h1v1h-1zM551 324h1v1h-1zM551 330h1v1h-1zM551 336h1v1h-1zM551 342h1v1h-1zM551 348h1v1h-1zM551 354h1v1h-1zM551 360h1v1h-1zM551 366h1v1h-1zM551 372h1v1h-1zM551 378h1v1h-1zM590 102h1v1h-1zM590 108h1v1h-1zM590 114h1v1h-1zM590 120h1v1h-1zM590 126h1v1h-1zM590 132h1v1h-1zM590 138h1v1h-1zM590 144h1v1h-1zM590 150h1v1h-1zM590 156h1v1h-1zM590 162h1v1h-1zM590 168h1v1h-1zM590 174h1v1h-1zM590 180h1v1h-1zM590 186h1v1h-1zM590 192h1v1h-1zM590 198h1v1h-1zM590 204h1v1h-1zM590 210h1v1h-1zM590 216h1v1h-1zM590 222h1v1h-1zM590 228h1v1h-1zM590 234h1v1h-1zM590 240h1v1h-1zM590 246h1v1h-1zM590 252h1v1h-1zM590 258h1v1h-1zM590 264h1v1h-1zM590 270h1v1h-1zM590 276h1v1h-1zM590 282h1v1h-1zM590 288h1v1h-1zM590 294h1v1h-1zM590 300h1v1h-1zM590 306h1v1h-1zM590 312h1v1h-1zM590 318h1v1h-1zM590 324h1v1h-1zM590 330h1v1h-1zM590 336h1v1h-1zM590 342h1v1h-1zM590 348h1v1h-1zM590 354h1v1h-1zM590 360h1v1h-1zM590 366h1v1h-1zM590 372h1v1h-1zM590 378h1v1h-1zM609 102h1v1h-1zM609 108h1v1h-1zM609 114h1v1h-1zM609 120h1v1h-1zM609 126h1v1h-1zM609 132h1v1h-1zM609 138h1v1h-1zM609 144h1v1h-1zM609 150h1v1h-1zM609 156h1v1h-1zM609 162h1v1h-1zM609 168h1v1h-1zM609 174h1v1h-1zM609 180h1v1h-1zM609 186h1v1h-1zM609 192h1v1h-1zM609 198h1v1h-1zM609 204h1v1h-1zM609 210h1v1h-1zM609 216h1v1h-1zM609 222h1v1h-1zM609 228h1v1h-1zM609 234h1v1h-1zM609 240h1v1h-1zM609 246h1v1h-1zM609 252h1v1h-1zM609 258h1v1h-1zM609 264h1v1h-1zM609 270h1v1h-1zM609 276h1v1h-1zM609 282h1v1h-1zM609 288h1v1h-1zM609 294h1v1h-1zM609 300h1v1h-1zM609 306h1v1h-1zM609 312h1v1h-1zM609 318h1v1h-1zM609 324h1v1h-1zM609 330h1v1h-1zM609 336h1v1h-1zM609 342h1v1h-1zM609 348h1v1h-1zM609 354h1v1h-1zM609 360h1v1h-1zM609 366h1v1h-1zM609 372h1v1h-1zM609 378h1v1h-1zM628 102h1v1h-1zM628 108h1v1h-1zM628 114h1v1h-1zM628 120h1v1h-1zM628 126h1v1h-1zM628 132h1v1h-1zM628 138h1v1h-1zM628 144h1v1h-1zM628 150h1v1h-1zM628 156h1v1h-1zM628 162h1v1h-1zM628 168h1v1h-1zM628 174h1v1h-1zM628 180h1v1h-1zM628 186h1v1h-1zM628 192h1v1h-1zM628 198h1v1h-1zM628 204h1v1h-1zM628 210h1v1h-1zM628 216h1v1h-1zM628 222h1v1h-1zM628 228h1v1h-1zM628 234h1v1h-1zM628 240h1v1h-1zM628 246h1v1h-1zM628 252h1v1h-1zM628 258h1v1h-1zM628 264h1v1h-1zM628 270h1v1h-1zM628 276h1v1h-1zM628 282h1v1h-1zM628 288h1v1h-1zM628 294h1v1h-1zM628 300h1v1h-1zM628 306h1v1h-1zM628 312h1v1h-1zM628 318h1v1h-1zM628 324h1v1h-1zM628 330h1v1h-1zM628 336h1v1h-1zM628 342h1v1h-1zM628 348h1v1h-1zM628 354h1v1h-1zM628 360h1v1h-1zM628 366h1v1h-1zM628 372h1v1h-1zM628 378h1v1h-1zM666 102h1v1h-1zM666 108h1v1h-1zM666 114h1v1h-1zM666 120h1v1h-1zM666 126h1v1h-1zM666 132h1v1h-1zM666 138h1v1h-1zM666 144h1v1h-1zM666 150h1v1h-1zM666 156h1v1h-1zM666 162h1v1h-1zM666 168h1v1h-1zM666 174h1v1h-1zM666 180h1v1h-1zM666 186h1v1h-1zM666 192h1v1h-1zM666 198h1v1h-1zM666 204h1v1h-1zM666 210h1v1h-1zM666 216h1v1h-1zM666 222h1v1h-1zM666 228h1v1h-1zM666 234h1v1h-1zM666 240h1v1h-1zM666 246h1v1h-1zM666 252h1v1h-1zM666 258h1v1h-1zM666 264h1v1h-1zM666 270h1v1h-1zM666 276h1v1h-1zM666 282h1v1h-1zM666 288h1v1h-1zM666 294h1v1h-1zM666 300h1v1h-1zM666 306h1v1h-1zM666 312h1v1h-1zM666 318h1v1h-1zM666 324h1v1h-1zM666 330h1v1h-1zM666 336h1v1h-1zM666 342h1v1h-1zM666 348h1v1h-1zM666 354h1v1h-1zM666 360h1v1h-1zM666 366h1v1h-1zM666 372h1v1h-1zM666 378h1v1h-1zM705 102h1v1h-1zM705 108h1v1h-1zM705 114h1v1h-1zM705 120h1v1h-1zM705 126h1v1h-1zM705 132h1v1h-1zM705 138h1v1h-1zM705 144h1v1h-1zM705 150h1v1h-1zM705 156h1v1h-1zM705 162h1v1h-1zM705 168h1v1h-1zM705 174h1v1h-1zM705 180h1v1h-1zM705 186h1v1h-1zM705 192h1v1h-1zM705 198h1v1h-1zM705 204h1v1h-1zM705 210h1v1h-1zM705 216h1v1h-1zM705 222h1v1h-1zM705 228h1v1h-1zM705 234h1v1h-1zM705 240h1v1h-1zM705 246h1v1h-1zM705 252h1v1h-1zM705 258h1v1h-1zM705 264h1v1h-1zM705 270h1v1h-1zM705 276h1v1h-1zM705 282h1v1h-1zM705 288h1v1h-1zM705 294h1v1h-1zM705 300h1v1h-1zM705 306h1v1h-1zM705 312h1v1h-1zM705 318h1v1h-1zM705 324h1v1h-1zM705 330h1v1h-1zM705 336h1v1h-1zM705 342h1v1h-1zM705 348h1v1h-1zM705 354h1v1h-1zM705 360h1v1h-1zM705 366h1v1h-1zM705 372h1v1h-1zM705 378h1v1h-1zM744 102h1v1h-1zM744 108h1v1h-1zM744 114h1v1h-1zM744 120h1v1h-1zM744 126h1v1h-1zM744 132h1v1h-1zM744 138h1v1h-1zM744 144h1v1h-1zM744 150h1v1h-1zM744 156h1v1h-1zM744 162h1v1h-1zM744 168h1v1h-1zM744 174h1v1h-1zM744 180h1v1h-1zM744 186h1v1h-1zM744 192h1v1h-1zM744 198h1v1h-1zM744 204h1v1h-1zM744 210h1v1h-1zM744 216h1v1h-1zM744 222h1v1h-1zM744 228h1v1h-1zM744 234h1v1h-1zM744 240h1v1h-1zM744 246h1v1h-1zM744 252h1v1h-1zM744 258h1v1h-1zM744 264h1v1h-1zM744 270h1v1h-1zM744 276h1v1h-1zM744 282h1v1h-1zM744 288h1v1h-1zM744 294h1v1h-1zM744 300h1v1h-1zM744 306h1v1h-1zM744 312h1v1h-1zM744 318h1v1h-1zM744 324h1v1h-1zM744 330h1v1h-1zM744 336h1v1h-1zM744 342h1v1h-1zM744 348h1v1h-1zM744 354h1v1h-1zM744 360h1v1h-1zM744 366h1v1h-1zM744 372h1v1h-1zM744 378h1v1h-1zM763 102h1v1h-1zM763 108h1v1h-1zM763 114h1v1h-1zM763 120h1v1h-1zM763 126h1v1h-1zM763 132h1v1h-1zM763 138h1v1h-1zM763 144h1v1h-1zM763 150h1v1h-1zM763 156h1v1h-1zM763 162h1v1h-1zM763 168h1v1h-1zM763 174h1v1h-1zM763 180h1v1h-1zM763 186h1v1h-1zM763 192h1v1h-1zM763 198h1v1h-1zM763 204h1v1h-1zM763 210h1v1h-1zM763 216h1v1h-1zM763 222h1v1h-1zM763 228h1v1h-1zM763 234h1v1h-1zM763 240h1v1h-1zM763 246h1v1h-1zM763 252h1v1h-1zM763 258h1v1h-1zM763 264h1v1h-1zM763 270h1v1h-1zM763 276h1v1h-1zM763 282h1v1h-1zM763 288h1v1h-1zM763 294h1v1h-1zM763 300h1v1h-1zM763 306h1v1h-1zM763 312h1v1h-1zM763 318h1v1h-1zM763 324h1v1h-1zM763 330h1v1h-1zM763 336h1v1h-1zM763 342h1v1h-1zM763 348h1v1h-1zM763 354h1v1h-1zM763 360h1v1h-1zM763 366h1v1h-1zM763 372h1v1h-1zM763 378h1v1h-1zM783 102h1v1h-1zM783 108h1v1h-1zM783 114h1v1h-1zM783 120h1v1h-1zM783 126h1v1h-1zM783 132h1v1h-1zM783 138h1v1h-1zM783 144h1v1h-1zM783 150h1v1h-1zM783 156h1v1h-1zM783 162h1v1h-1zM783 168h1v1h-1zM783 174h1v1h-1zM783 180h1v1h-1zM783 186h1v1h-1zM783 192h1v1h-1zM783 198h1v1h-1zM783 204h1v1h-1zM783 210h1v1h-1zM783 216h1v1h-1zM783 222h1v1h-1zM783 228h1v1h-1zM783 234h1v1h-1zM783 240h1v1h-1zM783 246h1v1h-1zM783 252h1v1h-1zM783 258h1v1h-1zM783 264h1v1h-1zM783 270h1v1h-1zM783 276h1v1h-1zM783 282h1v1h-1zM783 288h1v1h-1zM783 294h1v1h-1zM783 300h1v1h-1zM783 306h1v1h-1zM783 312h1v1h-1zM783 318h1v1h-1zM783 324h1v1h-1zM783 330h1v1h-1zM783 336h1v1h-1zM783 342h1v1h-1zM783 348h1v1h-1zM783 354h1v1h-1zM783 360h1v1h-1zM783 366h1v1h-1zM783 372h1v1h-1zM783 378h1v1h-1zM801 102h1v1h-1zM801 108h1v1h-1zM801 114h1v1h-1zM801 120h1v1h-1zM801 126h1v1h-1zM801 132h1v1h-1zM801 138h1v1h-1zM801 144h1v1h-1zM801 150h1v1h-1zM801 156h1v1h-1zM801 162h1v1h-1zM801 168h1v1h-1zM801 174h1v1h-1zM801 180h1v1h-1zM801 186h1v1h-1zM801 192h1v1h-1zM801 198h1v1h-1zM801 204h1v1h-1zM801 210h1v1h-1zM801 216h1v1h-1zM801 222h1v1h-1zM801 228h1v1h-1zM801 234h1v1h-1zM801 240h1v1h-1zM801 246h1v1h-1zM801 252h1v1h-1zM801 258h1v1h-1zM801 264h1v1h-1zM801 270h1v1h-1zM801 276h1v1h-1zM801 282h1v1h-1zM801 288h1v1h-1zM801 294h1v1h-1zM801 300h1v1h-1zM801 306h1v1h-1zM801 312h1v1h-1zM801 318h1v1h-1zM801 324h1v1h-1zM801 330h1v1h-1zM801 336h1v1h-1zM801 342h1v1h-1zM801 348h1v1h-1zM801 354h1v1h-1zM801 360h1v1h-1zM801 366h1v1h-1zM801 372h1v1h-1zM801 378h1v1h-1z" fill="#000"/>
<rect x="512.5" y="96.5" width="310" height="283" fill="none" stroke="#000" shape-rendering="crispEdges"/>
<polyline points="512.5,375.1 551.5,372.7 590.5,350.2 609.5,289.9 628.5,268.2 666.5,258.9 705.5,248.2 744.5,216.2 763.5,161.3 783.5,98.9 801.5,96.5" fill="none" stroke="#0000ff" stroke-width="2" shape-rendering="crispEdges" stroke-linejoin="miter"/>
<polyline points="512.5,375.1 551.5,372.7 590.5,349.9 609.5,289.1 628.5,267.2 666.5,257.8 705.5,247.0 744.5,215.1 763.5,160.7 783.5,98.9 801.5,96.5" fill="none" stroke="#00ff00" stroke-width="2" shape-rendering="crispEdges" stroke-linejoin="miter"/>
<polyline points="512.5,374.9 551.5,372.4 590.5,348.9 609.5,285.9 628.5,263.3 666.5,253.5 705.5,242.2 744.5,210.5 763.5,158.1 783.5,98.8 801.5,96.5" fill="none" stroke="#ff8000" stroke-width="2" shape-rendering="crispEdges" stroke-linejoin="miter"/>
<polyline points="512.5,374.8 551.5,372.3 590.5,348.6 609.5,285.1 628.5,262.3 666.5,252.3 705.5,241.0 744.5,209.4 763.5,157.5 783.5,98.8 801.5,96.5" fill="none" stroke="#ff0000" stroke-width="2" shape-rendering="crispEdges" stroke-linejoin="miter"/>
<path d="M510 379h5v1h-5zM510 351h5v1h-5zM510 322h5v1h-5zM510 294h5v1h-5zM510 266h5v1h-5zM510 238h5v1h-5zM510 209h5v1h-5zM510 181h5v1h-5zM510 153h5v1h-5zM510 124h5v1h-5zM510 96h5v1h-5zM512 377h1v5h-1zM551 377h1v5h-1zM590 377h1v5h-1zM609 377h1v5h-1zM628 377h1v5h-1zM666 377h1v5h-1zM705 377h1v5h-1zM744 377h1v5h-1zM763 377h1v5h-1zM783 377h1v5h-1zM801 377h1v5h-1z" fill="#000"/>
<text x="507" y="384" text-anchor="end" font-size="12">0</text>
<text x="507" y="327" text-anchor="end" font-size="12">20</text>
<text x="507" y="271" text-anchor="end" font-size="12">40</text>
<text x="507" y="214" text-anchor="end" font-size="12">60</text>
<text x="507" y="158" text-anchor="end" font-size="12">80</text>
<text x="507" y="101" text-anchor="end" font-size="12">100</text>
<text transform="translate(517,388) rotate(-90)" text-anchor="end" font-size="12.5">0.075</text>
<text transform="translate(556,388) rotate(-90)" text-anchor="end" font-size="12.5">0.15</text>
<text transform="translate(595,388) rotate(-90)" text-anchor="end" font-size="12.5">0.3</text>
<text transform="translate(614,388) rotate(-90)" text-anchor="end" font-size="12.5">0.425</text>
<text transform="translate(633,388) rotate(-90)" text-anchor="end" font-size="12.5">0.6</text>
<text transform="translate(671,388) rotate(-90)" text-anchor="end" font-size="12.5">1.18</text>
<text transform="translate(710,388) rotate(-90)" text-anchor="end" font-size="12.5">2.36</text>
<text transform="translate(749,388) rotate(-90)" text-anchor="end" font-size="12.5">4.75</text>
<text transform="translate(768,388) rotate(-90)" text-anchor="end" font-size="12.5">6.7</text>
<text transform="translate(788,388) rotate(-90)" text-anchor="end" font-size="12.5">9.5</text>
<text transform="translate(806,388) rotate(-90)" text-anchor="end" font-size="12.5">13.2</text>
</svg>

<div class="a" style="left:477px;top:453px;width:961px;height:362px;border:1px solid #aca899;border-right-color:#fff;border-bottom-color:#fff"></div>
<div class="a" style="left:478px;top:454px;width:959px;height:360px;border:1px solid #fff;border-width:0;box-shadow:inset -1px -1px 0 #aca899"></div>
<div class="fx" style="left:478px;top:454px;width:60px;height:16px;background:#ece9d8"><div class="cl">Sieve (mm)</div></div>
<div class="fx" style="left:538px;top:454px;width:40px;height:16px;background:#0000ff"><div class="cl">TAR</div></div>
<div class="fx" style="left:578px;top:454px;width:40px;height:16px;background:#00ff00"><div class="cl">TAR</div></div>
<div class="fx" style="left:618px;top:454px;width:40px;height:16px;background:#ff8000"><div class="cl">TAR</div></div>
<div class="fx" style="left:658px;top:454px;width:40px;height:16px;background:#ff0000"><div class="cl">TAR</div></div>
<div class="fx" style="left:478px;top:470px;width:60px;height:16px;background:#ece9d8"><div class="cl">Mix Type</div></div>
<div class="fx" style="left:538px;top:470px;width:40px;height:16px;background:#ece9d8"><div class="cl">ST</div></div>
<div class="fx" style="left:578px;top:470px;width:40px;height:16px;background:#ece9d8"><div class="cl">ST</div></div>
<div class="fx" style="left:618px;top:470px;width:40px;height:16px;background:#ece9d8"><div class="cl">ST</div></div>
<div class="fx" style="left:658px;top:470px;width:40px;height:16px;background:#ece9d8"><div class="cl">ST</div></div>
<div class="fx" style="left:478px;top:486px;width:60px;height:16px;background:#ece9d8"><div class="cl">Code</div></div>
<div class="fx" style="left:538px;top:486px;width:40px;height:16px;background:#ece9d8"><div class="cl">NTARG_350</div></div>
<div class="fx" style="left:578px;top:486px;width:40px;height:16px;background:#ece9d8"><div class="cl">NTARG_340</div></div>
<div class="fx" style="left:618px;top:486px;width:40px;height:16px;background:#ece9d8"><div class="cl">NTARG_300</div></div>
<div class="fx" style="left:658px;top:486px;width:40px;height:16px;background:#ece9d8"><div class="cl">NTARG_290</div></div>
<div class="fx" style="left:478px;top:502px;width:60px;height:16px;background:#ece9d8"><div class="cl">Name</div></div>
<div class="fx" style="left:538px;top:502px;width:40px;height:16px;background:#ece9d8"><div class="cl">Target ST 10mm</div></div>
<div class="fx" style="left:578px;top:502px;width:40px;height:16px;background:#ece9d8"><div class="cl">Target ST 10mm</div></div>
<div class="fx" style="left:618px;top:502px;width:40px;height:16px;background:#ece9d8"><div class="cl">Target ST 10mm</div></div>
<div class="fx" style="left:658px;top:502px;width:40px;height:16px;background:#ece9d8"><div class="cl">Target ST 10mm</div></div>
<div class="fx" style="left:478px;top:518px;width:60px;height:16px;background:#ece9d8"><div class="cl">Cem (kg)</div></div>
<div class="fx" style="left:538px;top:518px;width:40px;height:16px;background:#ece9d8"><div class="cl">350</div></div>
<div class="fx" style="left:578px;top:518px;width:40px;height:16px;background:#ece9d8"><div class="cl">340</div></div>
<div class="fx" style="left:618px;top:518px;width:40px;height:16px;background:#ece9d8"><div class="cl">300</div></div>
<div class="fx" style="left:658px;top:518px;width:40px;height:16px;background:#ece9d8"><div class="cl">290</div></div>
<div class="fx" style="left:478px;top:534px;width:60px;height:16px;background:#ece9d8"><div class="cl">13.2</div></div>
<div class="dc" style="left:538px;top:534px;width:40px;height:16px"><div class="cl">100.00</div></div>
<div class="dc" style="left:578px;top:534px;width:40px;height:16px"><div class="cl">100.00</div></div>
<div class="dc" style="left:618px;top:534px;width:40px;height:16px"><div class="cl">100.00</div></div>
<div class="dc" style="left:658px;top:534px;width:40px;height:16px"><div class="cl">100.00</div></div>
<div class="fx" style="left:478px;top:550px;width:60px;height:16px;background:#ece9d8"><div class="cl">9.5</div></div>
<div class="dc" style="left:538px;top:550px;width:40px;height:16px"><div class="cl">99.15</div></div>
<div class="dc" style="left:578px;top:550px;width:40px;height:16px"><div class="cl">99.15</div></div>
<div class="dc" style="left:618px;top:550px;width:40px;height:16px"><div class="cl">99.18</div></div>
<div class="dc" style="left:658px;top:550px;width:40px;height:16px"><div class="cl">99.19</div></div>
<div class="fx" style="left:478px;top:566px;width:60px;height:16px;background:#ece9d8"><div class="cl">6.7</div></div>
<div class="dc" style="left:538px;top:566px;width:40px;height:16px"><div class="cl">77.09</div></div>
<div class="dc" style="left:578px;top:566px;width:40px;height:16px"><div class="cl">77.31</div></div>
<div class="dc" style="left:618px;top:566px;width:40px;height:16px"><div class="cl">78.22</div></div>
<div class="dc" style="left:658px;top:566px;width:40px;height:16px"><div class="cl">78.45</div></div>
<div class="fx" style="left:478px;top:582px;width:60px;height:16px;background:#ece9d8"><div class="cl">4.75</div></div>
<div class="dc" style="left:538px;top:582px;width:40px;height:16px"><div class="cl">57.70</div></div>
<div class="dc" style="left:578px;top:582px;width:40px;height:16px"><div class="cl">58.10</div></div>
<div class="dc" style="left:618px;top:582px;width:40px;height:16px"><div class="cl">59.70</div></div>
<div class="dc" style="left:658px;top:582px;width:40px;height:16px"><div class="cl">60.10</div></div>
<div class="fx" style="left:478px;top:598px;width:60px;height:16px;background:#ece9d8"><div class="cl">2.36</div></div>
<div class="dc" style="left:538px;top:598px;width:40px;height:16px"><div class="cl">46.39</div></div>
<div class="dc" style="left:578px;top:598px;width:40px;height:16px"><div class="cl">46.81</div></div>
<div class="dc" style="left:618px;top:598px;width:40px;height:16px"><div class="cl">48.52</div></div>
<div class="dc" style="left:658px;top:598px;width:40px;height:16px"><div class="cl">48.95</div></div>
<div class="fx" style="left:478px;top:614px;width:60px;height:16px;background:#ece9d8"><div class="cl">1.18</div></div>
<div class="dc" style="left:538px;top:614px;width:40px;height:16px"><div class="cl">42.61</div></div>
<div class="dc" style="left:578px;top:614px;width:40px;height:16px"><div class="cl">42.99</div></div>
<div class="dc" style="left:618px;top:614px;width:40px;height:16px"><div class="cl">44.54</div></div>
<div class="dc" style="left:658px;top:614px;width:40px;height:16px"><div class="cl">44.93</div></div>
<div class="fx" style="left:478px;top:630px;width:60px;height:16px;background:#ece9d8"><div class="cl">0.6</div></div>
<div class="dc" style="left:538px;top:630px;width:40px;height:16px"><div class="cl">39.33</div></div>
<div class="dc" style="left:578px;top:630px;width:40px;height:16px"><div class="cl">39.67</div></div>
<div class="dc" style="left:618px;top:630px;width:40px;height:16px"><div class="cl">41.06</div></div>
<div class="dc" style="left:658px;top:630px;width:40px;height:16px"><div class="cl">41.41</div></div>
<div class="fx" style="left:478px;top:646px;width:60px;height:16px;background:#ece9d8"><div class="cl">0.425</div></div>
<div class="dc" style="left:538px;top:646px;width:40px;height:16px"><div class="cl">31.66</div></div>
<div class="dc" style="left:578px;top:646px;width:40px;height:16px"><div class="cl">31.94</div></div>
<div class="dc" style="left:618px;top:646px;width:40px;height:16px"><div class="cl">33.06</div></div>
<div class="dc" style="left:658px;top:646px;width:40px;height:16px"><div class="cl">33.34</div></div>
<div class="fx" style="left:478px;top:662px;width:60px;height:16px;background:#ece9d8"><div class="cl">0.3</div></div>
<div class="dc" style="left:538px;top:662px;width:40px;height:16px"><div class="cl">10.35</div></div>
<div class="dc" style="left:578px;top:662px;width:40px;height:16px"><div class="cl">10.45</div></div>
<div class="dc" style="left:618px;top:662px;width:40px;height:16px"><div class="cl">10.82</div></div>
<div class="dc" style="left:658px;top:662px;width:40px;height:16px"><div class="cl">10.91</div></div>
<div class="fx" style="left:478px;top:678px;width:60px;height:16px;background:#ece9d8"><div class="cl">0.15</div></div>
<div class="dc" style="left:538px;top:678px;width:40px;height:16px"><div class="cl">2.39</div></div>
<div class="dc" style="left:578px;top:678px;width:40px;height:16px"><div class="cl">2.41</div></div>
<div class="dc" style="left:618px;top:678px;width:40px;height:16px"><div class="cl">2.52</div></div>
<div class="dc" style="left:658px;top:678px;width:40px;height:16px"><div class="cl">2.55</div></div>
<div class="fx" style="left:478px;top:694px;width:60px;height:16px;background:#ece9d8"><div class="cl">0.075</div></div>
<div class="dc" style="left:538px;top:694px;width:40px;height:16px"><div class="cl">1.54</div></div>
<div class="dc" style="left:578px;top:694px;width:40px;height:16px"><div class="cl">1.56</div></div>
<div class="dc" style="left:618px;top:694px;width:40px;height:16px"><div class="cl">1.64</div></div>
<div class="dc" style="left:658px;top:694px;width:40px;height:16px"><div class="cl">1.66</div></div>
<div class="a" style="left:697px;top:534px;width:1px;height:176px;background:#000"></div>
<div class="a" style="left:538px;top:709px;width:160px;height:1px;background:#000"></div><div class="a" style="left:440px;top:506px;width:64px;height:17px;background:#ffffe1;border:1px solid #000;line-height:14px;padding-left:1px;padding-top:1px;white-space:nowrap;overflow:hidden;letter-spacing:-0.5px">N10MM_N32</div>




<div class="a" style="left:0;top:793px;width:215px;height:1px;background:#aca899;box-shadow:0 1px 0 #fff"></div>
<div class="btn" style="left:0;top:797px;width:13px;height:22px"></div>
<svg class="a" style="left:3px;top:806px" width="7" height="4"><path d="M0 0h7l-3.5 4z" fill="#aca899"/></svg>
<div class="inp" style="left:16px;top:797px;width:152px;height:22px;line-height:19px;padding-left:3px;font-size:11px">Default</div>
<div class="btn" style="left:151px;top:799px;width:16px;height:18px"></div>
<svg class="a" style="left:155px;top:805px" width="8" height="5"><path d="M0 0h8l-4 4.5z" fill="#000"/></svg>
<div class="btn" style="left:170px;top:797px;width:22px;height:22px"></div>
<svg class="a" style="left:172px;top:799px" width="18" height="18"><circle cx="11" cy="7" r="5" fill="#d8ecff" stroke="#6a9ad0" stroke-width="1.5"/><path d="M7.5 10.5 L2 16" stroke="#f0a030" stroke-width="2.5"/></svg>
<div class="btn" style="left:192px;top:797px;width:22px;height:22px"></div>
<svg class="a" style="left:194px;top:799px" width="18" height="18" shape-rendering="crispEdges"><rect x="1.5" y="1.5" width="10" height="10" fill="#fff" stroke="#0000c0"/><path d="M3 4h7M3 6h7M3 8h7" stroke="#0000c0"/><path d="M15 7 L10 16" stroke="#000" stroke-width="2.5"/><path d="M15 7 L10.5 15" stroke="#ff0" stroke-width="1"/><path d="M4 16h1M6 16h1M8 16h1" stroke="#000"/></svg>
<div class="sp" style="left:0px;width:164px;color:#000;padding-left:0px"></div>
<div class="sp" style="left:1016px;width:95px;color:#000;padding-left:3px">ADLN0010</div>
<div class="sp" style="left:1113px;width:95px;color:#000;padding-left:3px">spectra.qest</div>
<div class="sp" style="left:1210px;width:66px;color:#000;padding-left:3px">17/08/2007</div>
<div class="sp" style="left:1278px;width:51px;color:#000;padding-left:6px">4:11 PM</div>
<div class="sp" style="left:1332px;width:31px;color:#aca899;padding-left:1px;letter-spacing:-0.5px">CAPS</div>
<div class="sp" style="left:1365px;width:31px;color:#000;padding-left:1px;letter-spacing:-0.5px">NUM</div>
<div class="sp" style="left:1397px;width:24px;color:#000;padding-left:1px">INS</div>
<div class="a" id="task"></div>
<div class="a" style="left:0;top:840px;width:97px;height:30px;border-radius:0 8px 8px 0/0 15px 15px 0;background:linear-gradient(#2f7f2f 0,#66b466 1px,#4da54d 4px,#3d983d 9px,#46ac46 17px,#3b9b3b 24px,#2b7a2b 29px,#2b7a2b 30px);box-shadow:inset -3px 0 4px rgba(10,70,10,.55)"></div>
<svg class="a" style="left:10px;top:846px" width="20" height="18"><path d="M2 3 Q5 1 9 2 L8 8 Q5 7 1 8z" fill="#f25a1c"/><path d="M10 2 Q14 3 18 2 L17 8 Q13 9 9 8z" fill="#7ac21c"/><path d="M1 9 Q5 8 8 9 L7 15 Q4 14 0 15z" fill="#2a8ae8"/><path d="M9 9 Q13 10 17 9 L16 15 Q12 16 8 15z" fill="#fcc21c"/></svg>
<div class="t" style="left:34px;top:844px;font-size:17px;font-weight:bold;font-style:italic;color:#fff;line-height:22px;text-shadow:1px 1px 1px #1a4a1a">start</div>
<div class="tk" style="left:107px">Inbox -...</div>
<svg class="a" style="left:115px;top:848px" width="16" height="16"><use href="#tk0"/></svg>
<div class="tk" style="left:200px">Boral R...</div>
<svg class="a" style="left:208px;top:848px" width="16" height="16"><use href="#tk1"/></svg>
<div class="tk" style="left:294px">Local Di...</div>
<svg class="a" style="left:302px;top:848px" width="16" height="16"><use href="#tk2"/></svg>
<div class="tk" style="left:388px">Packages</div>
<svg class="a" style="left:396px;top:848px" width="16" height="16"><use href="#tk3"/></svg>
<div class="tk" style="left:481px">Boral S...</div>
<svg class="a" style="left:489px;top:848px" width="16" height="16"><use href="#tk4"/></svg>
<div class="tk" style="left:574px">Remote...</div>
<svg class="a" style="left:582px;top:848px" width="16" height="16"><use href="#tk5"/></svg>
<div class="tk" style="left:668px">Launch...</div>
<svg class="a" style="left:676px;top:848px" width="16" height="16"><use href="#tk6"/></svg>
<div class="tk" style="left:762px">Launch...</div>
<svg class="a" style="left:770px;top:848px" width="16" height="16"><use href="#tk7"/></svg>
<div class="tk" style="left:855px">RE: Ne...</div>
<svg class="a" style="left:863px;top:848px" width="16" height="16"><use href="#tk8"/></svg>
<div class="tk act" style="left:948px">QESTMix</div>
<svg class="a" style="left:956px;top:848px" width="16" height="16"><use href="#tk9"/></svg>
<div class="tk" style="left:1042px">untitled...</div>
<svg class="a" style="left:1050px;top:848px" width="16" height="16"><use href="#tk10"/></svg>
<div class="tk" style="left:1136px">wiki</div>
<svg class="a" style="left:1144px;top:848px" width="16" height="16"><use href="#tk11"/></svg>
<div class="a" style="left:1237px;top:848px;width:16px;height:16px;background:#3a6fd8"></div>
<div class="t" style="left:1238px;top:847px;color:#fff">EN</div>
<div class="a" style="left:1264px;top:840px;width:176px;height:60px;background:linear-gradient(#0c5ad0 0,#18a4ff 1px,#0f94ee 3px,#0f8ce8 50%,#0d8ae4 100%);border-left:1px solid #1042af;box-shadow:inset 1px 0 0 #14b0ff"></div>
<div class="t" style="left:1376px;top:843px;width:46px;text-align:center;color:#fff">4:11 PM</div>
<div class="t" style="left:1370px;top:862px;width:58px;text-align:center;color:#fff">Friday</div>
<div class="t" style="left:1364px;top:881px;width:70px;text-align:center;color:#fff">17/08/2007</div>
<svg class="a" style="left:1275px;top:844px" width="16" height="16"><use href="#tr_lab"/></svg>
<svg class="a" style="left:1293px;top:844px" width="16" height="16"><use href="#tr_mixg"/></svg>
<svg class="a" style="left:1311px;top:844px" width="16" height="16"><use href="#tr_lab2"/></svg>
<svg class="a" style="left:1329px;top:844px" width="16" height="16"><use href="#tr_clock"/></svg>
<svg class="a" style="left:1347px;top:844px" width="16" height="16"><use href="#tr_net"/></svg>
<svg class="a" style="left:1275px;top:862px" width="16" height="16"><use href="#tr_outl"/></svg>
<svg class="a" style="left:1293px;top:862px" width="16" height="16"><use href="#tr_netx"/></svg>
<svg class="a" style="left:1311px;top:862px" width="16" height="16"><use href="#tr_srv"/></svg>
<svg class="a" style="left:1329px;top:862px" width="16" height="16"><use href="#tr_vol"/></svg>
<svg class="a" style="left:1347px;top:862px" width="16" height="16"><use href="#tr_usb"/></svg>
<svg class="a" style="left:1275px;top:880px" width="16" height="16"><use href="#tr_msn"/></svg>
<svg class="a" style="left:1293px;top:880px" width="16" height="16"><use href="#tr_kav"/></svg>
<svg class="a" style="left:1311px;top:880px" width="16" height="16"><use href="#tr_wifi"/></svg>
<svg class="a" style="left:108px;top:877px" width="16" height="16"><use href="#q0"/></svg>
<svg class="a" style="left:132px;top:877px" width="16" height="16"><use href="#q1"/></svg>
<svg class="a" style="left:155px;top:877px" width="16" height="16"><use href="#q2"/></svg>
<svg class="a" style="left:178px;top:877px" width="16" height="16"><use href="#q3"/></svg>
<svg class="a" style="left:201px;top:877px" width="16" height="16"><use href="#q4"/></svg>
<svg class="a" style="left:224px;top:877px" width="16" height="16"><use href="#q5"/></svg>
<svg class="a" style="left:247px;top:877px" width="16" height="16"><use href="#q6"/></svg>
<svg class="a" style="left:270px;top:877px" width="16" height="16"><use href="#q7"/></svg>
<svg class="a" style="left:293px;top:877px" width="16" height="16"><use href="#q8"/></svg>
<svg class="a" style="left:316px;top:877px" width="16" height="16"><use href="#q9"/></svg>
<svg class="a" style="left:339px;top:877px" width="16" height="16"><use href="#q10"/></svg>
<svg class="a" style="left:362px;top:877px" width="16" height="16"><use href="#q10"/></svg>
<svg class="a" style="left:385px;top:877px" width="16" height="16"><use href="#q12"/></svg>
<svg class="a" style="left:408px;top:877px" width="16" height="16"><use href="#q13"/></svg>
<svg class="a" style="left:431px;top:877px" width="16" height="16"><use href="#q14"/></svg>
<svg class="a" style="left:454px;top:877px" width="16" height="16"><use href="#q15"/></svg>
<svg class="a" style="left:477px;top:877px" width="16" height="16"><use href="#q16"/></svg>
<svg class="a" style="left:500px;top:877px" width="16" height="16"><use href="#q17"/></svg>
<svg class="a" style="left:523px;top:877px" width="16" height="16"><use href="#q18"/></svg>
<svg class="a" style="left:546px;top:877px" width="16" height="16"><use href="#q19"/></svg>
<svg class="a" style="left:570px;top:877px" width="16" height="16"><use href="#q20"/></svg>
<svg class="a" style="left:593px;top:877px" width="16" height="16"><use href="#q21"/></svg>
<svg class="a" style="left:616px;top:877px" width="16" height="16"><use href="#q22"/></svg>
<svg class="a" style="left:639px;top:877px" width="16" height="16"><use href="#q23"/></svg>
<svg class="a" style="left:662px;top:877px" width="16" height="16"><use href="#q24"/></svg>
<svg class="a" style="left:685px;top:877px" width="16" height="16"><use href="#q25"/></svg>
<svg class="a" style="left:708px;top:877px" width="16" height="16"><use href="#q26"/></svg>
<svg class="a" style="left:731px;top:877px" width="16" height="16"><use href="#q27"/></svg>
<svg class="a" style="left:754px;top:877px" width="16" height="16"><use href="#q28"/></svg>

<svg width="0" height="0" style="position:absolute">
<defs>
<linearGradient id="gy" x1="0" y1="0" x2="0" y2="1"><stop offset="0" stop-color="#ffff00"/><stop offset="0.55" stop-color="#f0e000"/><stop offset="1" stop-color="#c89a10"/></linearGradient>
<linearGradient id="gmix" x1="0" y1="0" x2="1" y2="1"><stop offset="0" stop-color="#000000"/><stop offset="0.5" stop-color="#900000"/><stop offset="1" stop-color="#ff0000"/></linearGradient>
<symbol id="i_db" viewBox="0 0 16 16" shape-rendering="crispEdges"><path d="M0 0h15v1h-15zM0 1h15v1h-15z" fill="#000080"/><path d="M0 2h1v1h-1zM14 2h1v1h-1zM0 3h1v1h-1zM14 3h1v1h-1zM0 4h1v1h-1zM14 4h1v1h-1zM0 5h1v1h-1zM10 5h5v1h-5zM0 6h1v1h-1zM7 6h3v1h-3zM11 6h1v1h-1zM14 6h1v1h-1zM0 7h1v1h-1zM5 7h2v1h-2zM11 7h1v1h-1zM15 7h1v1h-1zM0 8h1v1h-1zM4 8h1v1h-1zM11 8h1v1h-1zM15 8h1v1h-1zM0 9h1v1h-1zM4 9h1v1h-1zM15 9h1v1h-1zM0 10h1v1h-1zM4 10h1v1h-1zM15 10h1v1h-1zM0 11h1v1h-1zM4 11h1v1h-1zM13 11h2v1h-2zM0 12h1v1h-1zM4 12h1v1h-1zM13 12h2v1h-2zM0 13h6v1h-6zM13 13h2v1h-2zM6 14h1v1h-1zM12 14h1v1h-1zM7 15h3v1h-3z" fill="#000"/><path d="M1 2h13v1h-13zM1 3h1v1h-1zM5 3h1v1h-1zM9 3h1v1h-1zM13 3h1v1h-1zM1 4h13v1h-13zM1 5h1v1h-1zM5 5h1v1h-1zM9 5h1v1h-1zM1 6h6v1h-6zM1 7h1v1h-1zM4 7h1v1h-1zM1 8h3v1h-3zM1 9h1v1h-1zM1 10h3v1h-3zM1 11h1v1h-1zM1 12h3v1h-3z" fill="#fff"/><path d="M2 3h3v1h-3zM6 3h3v1h-3zM10 3h3v1h-3zM2 5h3v1h-3zM6 5h3v1h-3zM2 7h2v1h-2zM2 9h2v1h-2zM2 11h2v1h-2z" fill="#808080"/><path d="M10 6h1v1h-1zM7 7h4v1h-4zM5 8h6v1h-6zM5 9h7v1h-7z" fill="#ffff00"/><path d="M12 6h2v1h-2zM12 7h3v1h-3zM12 8h3v1h-3z" fill="#ffff90"/><path d="M12 9h3v1h-3zM12 10h3v1h-3z" fill="#a0a0a0"/><path d="M5 10h7v1h-7zM5 11h8v1h-8z" fill="#e0d820"/><path d="M5 12h8v1h-8zM6 13h7v1h-7zM7 14h5v1h-5z" fill="#d0a020"/></symbol>
<symbol id="i_dbc" viewBox="0 0 16 16" shape-rendering="crispEdges"><path d="M0 0h15v1h-15zM0 1h15v1h-15z" fill="#000080"/><path d="M0 2h1v1h-1zM14 2h1v1h-1zM0 3h1v1h-1zM14 3h1v1h-1zM0 4h1v1h-1zM14 4h1v1h-1zM0 5h1v1h-1zM10 5h5v1h-5zM0 6h1v1h-1zM7 6h3v1h-3zM11 6h1v1h-1zM14 6h1v1h-1zM0 7h1v1h-1zM5 7h2v1h-2zM11 7h1v1h-1zM15 7h1v1h-1zM0 8h1v1h-1zM4 8h1v1h-1zM11 8h1v1h-1zM15 8h1v1h-1zM0 9h1v1h-1zM4 9h1v1h-1zM15 9h1v1h-1zM0 10h1v1h-1zM4 10h1v1h-1zM15 10h1v1h-1zM0 11h1v1h-1zM4 11h1v1h-1zM13 11h2v1h-2zM0 12h1v1h-1zM4 12h1v1h-1zM13 12h2v1h-2zM0 13h6v1h-6zM13 13h2v1h-2zM0 14h7v1h-7zM12 14h3v1h-3zM0 15h15v1h-15z" fill="#000"/><path d="M1 2h13v1h-13zM1 3h1v1h-1zM5 3h1v1h-1zM9 3h1v1h-1zM13 3h1v1h-1zM1 4h13v1h-13zM1 5h1v1h-1zM5 5h1v1h-1zM9 5h1v1h-1zM1 6h6v1h-6zM1 7h1v1h-1zM4 7h1v1h-1zM1 8h3v1h-3zM1 9h1v1h-1zM1 10h3v1h-3zM1 11h1v1h-1zM1 12h3v1h-3z" fill="#fff"/><path d="M2 3h3v1h-3zM6 3h3v1h-3zM10 3h3v1h-3zM2 5h3v1h-3zM6 5h3v1h-3zM2 7h2v1h-2zM2 9h2v1h-2zM2 11h2v1h-2z" fill="#808080"/><path d="M10 6h1v1h-1zM12 6h2v1h-2zM7 7h4v1h-4zM12 7h3v1h-3zM5 8h6v1h-6zM12 8h3v1h-3zM5 9h7v1h-7zM5 10h7v1h-7zM5 11h8v1h-8zM5 12h8v1h-8zM6 13h7v1h-7zM7 14h5v1h-5z" fill="#00ffff"/><path d="M12 9h3v1h-3zM12 10h3v1h-3z" fill="#a0a0a0"/></symbol>
<symbol id="i_dt" viewBox="0 0 16 16" shape-rendering="crispEdges"><path d="M0 0h4v1h-4zM0 1h1v1h-1zM3 1h2v1h-2zM0 2h1v1h-1zM4 2h2v1h-2zM0 3h1v1h-1zM5 3h1v1h-1zM0 4h1v1h-1zM5 4h1v1h-1zM0 5h1v1h-1zM5 5h1v1h-1zM0 6h1v1h-1zM4 6h2v1h-2zM0 7h1v1h-1zM4 7h1v1h-1zM0 8h1v1h-1zM3 8h2v1h-2zM0 9h4v1h-4z" fill="#ff0000"/><path d="M1 1h2v1h-2zM1 2h1v1h-1zM3 2h1v1h-1zM1 3h3v1h-3zM1 4h1v1h-1zM3 4h1v1h-1zM1 5h3v1h-3zM1 6h1v1h-1zM3 6h1v1h-1zM1 7h3v1h-3zM1 8h2v1h-2z" fill="#a8d8d8"/><path d="M5 1h5v1h-5zM9 2h2v1h-2zM6 3h7v1h-7zM8 4h1v1h-1zM12 4h1v1h-1zM6 5h9v1h-9zM8 6h1v1h-1zM14 6h1v1h-1zM5 7h6v1h-6zM13 7h2v1h-2zM5 8h1v1h-1zM8 8h1v1h-1zM4 9h5v1h-5zM3 10h1v1h-1zM6 10h1v1h-1zM8 10h1v1h-1zM3 11h6v1h-6zM5 12h1v1h-1zM8 12h1v1h-1zM5 13h4v1h-4z" fill="#808080"/><path d="M2 2h1v1h-1zM6 2h3v1h-3zM4 3h1v1h-1zM2 4h1v1h-1zM4 4h1v1h-1zM6 4h2v1h-2zM9 4h3v1h-3zM4 5h1v1h-1zM2 6h1v1h-1zM6 6h2v1h-2zM9 6h5v1h-5zM6 8h2v1h-2zM4 10h2v1h-2zM7 10h1v1h-1zM6 12h2v1h-2z" fill="#fff"/><path d="M11 7h2v1h-2zM9 8h1v1h-1zM12 8h1v1h-1zM15 8h1v1h-1zM9 9h1v1h-1zM12 9h1v1h-1zM15 9h1v1h-1zM9 10h1v1h-1zM15 10h1v1h-1zM9 11h1v1h-1zM15 11h1v1h-1zM9 12h1v1h-1zM14 12h2v1h-2zM9 13h1v1h-1zM14 13h1v1h-1zM10 14h4v1h-4z" fill="#000"/><path d="M10 8h2v1h-2zM10 9h2v1h-2zM10 10h3v1h-3zM10 11h3v1h-3z" fill="#ffff00"/><path d="M13 8h2v1h-2zM13 9h2v1h-2z" fill="#ffff90"/><path d="M13 10h2v1h-2zM13 11h2v1h-2z" fill="#a0a0a0"/><path d="M10 12h4v1h-4zM10 13h4v1h-4z" fill="#d0a020"/></symbol>
<symbol id="i_mtg" viewBox="0 0 16 16" shape-rendering="crispEdges"><path d="M0 0h8v1h-8zM0 1h1v1h-1zM0 2h1v1h-1zM2 2h5v1h-5zM0 3h1v1h-1zM2 3h1v1h-1zM14 3h1v1h-1zM0 4h1v1h-1zM2 4h1v1h-1zM14 4h1v1h-1zM0 5h1v1h-1zM2 5h1v1h-1zM14 5h1v1h-1zM0 6h1v1h-1zM2 6h1v1h-1zM14 6h1v1h-1zM0 7h1v1h-1zM2 7h1v1h-1zM14 7h1v1h-1zM0 8h1v1h-1zM2 8h1v1h-1zM1 9h1v1h-1z" fill="#808080"/><path d="M8 0h3v1h-3zM8 1h1v1h-1zM11 1h2v1h-2zM7 2h2v1h-2zM11 2h2v1h-2zM6 3h2v1h-2zM10 3h2v1h-2zM5 4h1v1h-1zM9 4h2v1h-2zM4 5h1v1h-1zM8 5h2v1h-2zM4 6h1v1h-1zM7 6h2v1h-2zM3 7h1v1h-1zM7 7h1v1h-1zM1 8h1v1h-1zM3 8h1v1h-1zM6 8h1v1h-1zM2 9h1v1h-1zM5 9h1v1h-1zM2 10h1v1h-1zM4 10h2v1h-2zM1 11h1v1h-1zM3 11h2v1h-2zM0 12h1v1h-1zM2 12h2v1h-2zM2 13h2v1h-2z" fill="#0000ff"/><path d="M11 0h3v1h-3zM9 1h2v1h-2zM0 9h1v1h-1z" fill="#a00000"/><path d="M1 1h7v1h-7zM1 2h1v1h-1zM1 3h1v1h-1zM3 3h3v1h-3zM13 3h1v1h-1zM1 4h1v1h-1zM3 4h2v1h-2zM8 4h1v1h-1zM11 4h3v1h-3zM1 5h1v1h-1zM3 5h1v1h-1zM7 5h1v1h-1zM10 5h4v1h-4zM1 6h1v1h-1zM3 6h1v1h-1zM6 6h1v1h-1zM9 6h5v1h-5zM1 7h1v1h-1zM5 7h2v1h-2zM13 7h1v1h-1zM5 8h1v1h-1zM4 9h1v1h-1z" fill="#fff"/><path d="M9 2h2v1h-2zM13 2h2v1h-2zM8 3h2v1h-2zM12 3h1v1h-1zM6 4h2v1h-2zM5 5h2v1h-2zM5 6h1v1h-1zM4 7h1v1h-1zM4 8h1v1h-1zM3 9h1v1h-1zM3 10h1v1h-1zM2 11h1v1h-1zM1 12h1v1h-1zM0 13h2v1h-2z" fill="#ff0000"/><path d="M8 7h5v1h-5zM7 8h1v1h-1zM12 8h1v1h-1zM14 8h1v1h-1zM6 9h1v1h-1zM12 9h1v1h-1zM15 9h1v1h-1zM6 10h1v1h-1zM15 10h1v1h-1zM5 11h1v1h-1zM15 11h1v1h-1zM5 12h1v1h-1zM13 12h2v1h-2zM5 13h1v1h-1zM13 13h1v1h-1zM5 14h2v1h-2zM12 14h2v1h-2zM6 15h7v1h-7z" fill="#000"/><path d="M8 8h4v1h-4zM7 9h5v1h-5zM7 10h6v1h-6zM6 11h7v1h-7z" fill="#ffff00"/><path d="M13 8h1v1h-1zM13 9h2v1h-2z" fill="#ffff90"/><path d="M13 10h2v1h-2zM13 11h2v1h-2z" fill="#a0a0a0"/><path d="M6 12h7v1h-7z" fill="#e0d820"/><path d="M6 13h7v1h-7zM7 14h5v1h-5z" fill="#d0a020"/></symbol>
<symbol id="i_mix" viewBox="0 0 16 16" shape-rendering="crispEdges"><rect x="0" y="0" width="16" height="16" fill="url(#gmix)"/><path d="M8 4h1v1h-1zM2 6h1v1h-1zM3 6h1v1h-1zM4 6h1v1h-1zM5 6h1v1h-1zM6 6h1v1h-1zM8 6h1v1h-1zM10 6h1v1h-1zM13 6h1v1h-1zM2 7h1v1h-1zM4 7h1v1h-1zM6 7h1v1h-1zM8 7h1v1h-1zM10 7h1v1h-1zM13 7h1v1h-1zM2 8h1v1h-1zM4 8h1v1h-1zM6 8h1v1h-1zM8 8h1v1h-1zM11 8h1v1h-1zM12 8h1v1h-1zM2 9h1v1h-1zM4 9h1v1h-1zM6 9h1v1h-1zM8 9h1v1h-1zM11 9h1v1h-1zM12 9h1v1h-1zM2 10h1v1h-1zM4 10h1v1h-1zM6 10h1v1h-1zM8 10h1v1h-1zM10 10h1v1h-1zM13 10h1v1h-1zM2 11h1v1h-1zM4 11h1v1h-1zM6 11h1v1h-1zM8 11h1v1h-1zM10 11h1v1h-1zM13 11h1v1h-1z" fill="#fff"/></symbol>
<symbol id="i_rel" viewBox="0 0 16 16" shape-rendering="crispEdges">
<path d="M2 6h1v3h-1zM4 6h1v3h-1zM6 6h1v3h-1z" fill="#0000ff"/>
<path d="M8 7h1v1h-1z M9 6h1v3h-1z M10 5h1v1h-1z M10 9h1v1h-1z M11 4h1v1h-1z M11 10h1v1h-1z M12 3h1v1h-1z M12 11h1v1h-1z" fill="#0000ff"/>
<path d="M12 0h1v1h1v1h1v1h-1v1h-1v-1h-1v-2h-1z M11 13h1v-2h1v-1h1v1h1v1h-1v1h-1v1h-1v-1h-1z" fill="#0000ff"/>
<path d="M10 6h1v-1h1v-1h1v1h-1v1h-1v1h-1z M10 9h1v1h1v1h1v-1h-1v-1h-1v-1h-1z" fill="#0000ff"/>
</symbol>
<symbol id="i_prod" viewBox="0 0 16 16" shape-rendering="crispEdges"><path d="M0 0h15v1h-15zM0 1h15v1h-15z" fill="#000080"/><path d="M0 2h1v1h-1zM14 2h1v1h-1zM0 3h1v1h-1zM14 3h1v1h-1zM0 4h1v1h-1zM14 4h1v1h-1zM0 5h1v1h-1zM14 5h1v1h-1zM0 6h1v1h-1zM5 6h5v1h-5zM14 6h1v1h-1zM0 7h1v1h-1zM4 7h1v1h-1zM10 7h1v1h-1zM14 7h1v1h-1zM0 8h1v1h-1zM3 8h1v1h-1zM14 8h1v1h-1zM0 9h1v1h-1zM2 9h1v1h-1zM13 9h2v1h-2zM0 10h1v1h-1zM10 10h2v1h-2zM15 10h1v1h-1zM0 11h1v1h-1zM10 11h1v1h-1zM15 11h1v1h-1zM0 12h1v1h-1zM15 12h1v1h-1zM0 13h16v1h-16zM3 14h2v1h-2zM6 14h2v1h-2zM13 14h2v1h-2zM3 15h2v1h-2zM6 15h2v1h-2zM13 15h2v1h-2z" fill="#000"/><path d="M1 2h13v1h-13zM1 3h1v1h-1zM5 3h1v1h-1zM9 3h1v1h-1zM13 3h1v1h-1zM1 4h13v1h-13zM1 5h1v1h-1zM5 5h1v1h-1zM9 5h1v1h-1zM13 5h1v1h-1zM1 6h4v1h-4zM10 6h4v1h-4zM1 7h1v1h-1zM3 7h1v1h-1zM11 7h1v1h-1zM13 7h1v1h-1zM1 8h2v1h-2zM11 8h1v1h-1zM13 8h1v1h-1zM1 9h1v1h-1zM11 9h1v1h-1zM1 10h1v1h-1zM1 11h1v1h-1zM1 12h3v1h-3z" fill="#fff"/><path d="M2 3h3v1h-3zM6 3h3v1h-3zM10 3h3v1h-3zM2 5h3v1h-3zM6 5h3v1h-3zM10 5h3v1h-3zM2 7h1v1h-1zM2 11h1v1h-1z" fill="#808080"/><path d="M5 7h5v1h-5zM4 8h7v1h-7zM3 9h8v1h-8zM2 10h1v1h-1zM5 10h1v1h-1z" fill="#fff8e0"/><path d="M12 7h1v1h-1zM12 8h1v1h-1zM12 9h1v1h-1zM12 10h3v1h-3zM11 11h4v1h-4zM4 12h11v1h-11z" fill="#00ffff"/><path d="M3 10h2v1h-2zM6 10h4v1h-4zM3 11h7v1h-7z" fill="#800040"/></symbol>
<symbol id="i_plant" viewBox="0 0 16 16" shape-rendering="crispEdges"><path d="M2 2h2v1h-2zM2 3h2v1h-2zM2 4h2v1h-2zM2 5h2v1h-2zM6 5h2v1h-2zM2 6h2v1h-2zM6 6h6v1h-6zM1 7h4v1h-4zM6 7h7v1h-7zM1 8h4v1h-4zM6 8h8v1h-8zM1 9h4v1h-4zM6 9h3v1h-3zM10 9h2v1h-2zM13 9h2v1h-2zM1 10h4v1h-4zM6 10h3v1h-3zM10 10h2v1h-2zM13 10h2v1h-2zM1 11h4v1h-4zM6 11h9v1h-9zM1 12h4v1h-4zM6 12h9v1h-9zM1 13h4v1h-4zM6 13h9v1h-9zM1 14h4v1h-4z" fill="#103a70"/><path d="M5 4h3v1h-3zM5 5h1v1h-1zM8 5h4v1h-4zM12 6h1v1h-1zM13 7h1v1h-1zM14 8h1v1h-1zM15 9h1v1h-1zM15 10h1v1h-1zM15 11h1v1h-1zM15 12h1v1h-1zM15 13h1v1h-1zM6 14h10v1h-10z" fill="#000"/><path d="M9 9h1v1h-1zM12 9h1v1h-1zM9 10h1v1h-1zM12 10h1v1h-1z" fill="#fff"/></symbol>
<symbol id="i_mat" viewBox="0 0 16 16" shape-rendering="crispEdges"><path d="M4 0h1v1h-1zM6 1h1v1h-1z" fill="#ffff00"/><path d="M3 1h3v1h-3zM2 2h6v1h-6zM2 3h6v1h-6zM1 4h7v1h-7zM1 5h7v1h-7zM3 7h3v1h-3zM4 9h1v1h-1zM4 10h1v1h-1z" fill="#e0a020"/><path d="M8 3h8v1h-8zM8 4h1v1h-1zM15 4h1v1h-1zM8 5h1v1h-1zM15 5h1v1h-1zM8 6h1v1h-1zM15 6h1v1h-1zM2 7h1v1h-1zM6 7h1v1h-1zM9 7h1v1h-1zM14 7h1v1h-1zM9 8h1v1h-1zM14 8h1v1h-1zM3 9h1v1h-1zM5 9h1v1h-1zM9 9h1v1h-1zM14 9h1v1h-1zM3 10h1v1h-1zM5 10h1v1h-1zM10 10h4v1h-4zM1 11h2v1h-2zM6 11h2v1h-2zM0 12h1v1h-1zM8 12h1v1h-1zM0 13h1v1h-1zM8 13h1v1h-1zM0 14h1v1h-1zM8 14h1v1h-1zM1 15h7v1h-7z" fill="#000"/><path d="M9 4h5v1h-5zM9 5h6v1h-6zM9 6h6v1h-6zM10 7h4v1h-4zM10 8h4v1h-4zM10 9h4v1h-4z" fill="#909090"/><path d="M14 4h1v1h-1z" fill="#808080"/><path d="M0 6h8v1h-8zM0 7h2v1h-2zM7 7h2v1h-2zM0 8h9v1h-9z" fill="#b08010"/><path d="M3 11h3v1h-3zM1 12h7v1h-7zM1 13h7v1h-7zM1 14h7v1h-7z" fill="#40f040"/></symbol>
<symbol id="i_vmat" viewBox="0 0 16 16" shape-rendering="crispEdges"><path d="M4 0h1v1h-1zM3 1h1v1h-1zM5 1h1v1h-1zM3 2h1v1h-1zM6 2h1v1h-1zM2 3h1v1h-1zM6 3h1v1h-1zM9 3h6v1h-6zM1 4h1v1h-1zM7 4h1v1h-1zM15 4h1v1h-1zM0 5h1v1h-1zM7 5h9v1h-9zM0 6h1v1h-1zM8 6h1v1h-1zM15 6h1v1h-1zM2 7h1v1h-1zM6 7h1v1h-1zM8 7h1v1h-1zM15 7h1v1h-1zM3 8h1v1h-1zM5 8h1v1h-1zM9 8h1v1h-1zM14 8h1v1h-1zM3 9h1v1h-1zM5 9h1v1h-1zM9 9h1v1h-1zM14 9h1v1h-1zM3 10h1v1h-1zM5 10h1v1h-1zM10 10h4v1h-4zM1 11h2v1h-2zM6 11h2v1h-2zM0 12h1v1h-1zM8 12h1v1h-1zM0 13h1v1h-1zM8 13h1v1h-1zM0 14h1v1h-1zM8 14h1v1h-1zM1 15h7v1h-7z" fill="#000"/></symbol>
<symbol id="i_list" viewBox="0 0 16 16" shape-rendering="crispEdges">
<path d="M1 0h8v1h1v2h-1v-2h-7v11h2v1h-3z" fill="#0000c0"/>
<rect x="2" y="1" width="7" height="11" fill="#fff"/>
<path d="M3 3h3v1h-3zM3 5h3v1h-3zM3 7h3v1h-3zM3 9h3v1h-3z" fill="#0000c0"/>
<rect x="4" y="3" width="11" height="13" fill="#0000c0"/>
<rect x="5" y="4" width="9" height="11" fill="#fff"/>
<path d="M6 5h7v1h-7zM6 7h7v1h-7zM6 9h7v1h-7zM6 11h7v1h-7zM6 13h7v1h-7z" fill="#0000c0"/>
</symbol>
</defs>
</svg>
<svg width="0" height="0" style="position:absolute">
<defs>
<symbol id="tk0" viewBox="0 0 16 16"><rect x="0.5" y="0.5" width="15" height="15" fill="#fff4d8" stroke="#e07a10" stroke-width="1.5"/><circle cx="8" cy="8" r="5" fill="none" stroke="#d08020" stroke-width="1.2"/><path d="M8 4.5V8h3" stroke="#d08020" fill="none"/></symbol>
<symbol id="tk1" viewBox="0 0 16 16"><circle cx="8" cy="8" r="7.5" fill="#e8741c"/><circle cx="9" cy="7" r="4.5" fill="#2a5aa8"/><path d="M1 8 Q3 1 9 2 Q5 4 6 8 Q7 12 12 12 Q8 15 4 13z" fill="#f5a020"/></symbol>
<symbol id="tk2" viewBox="0 0 16 16"><path d="M1 9 L5 5 H15 L12 9z" fill="#e0e0e0" stroke="#707070"/><path d="M1 9 H12 V12 H1z" fill="#a0a0a0" stroke="#606060"/><path d="M12 9 L15 5 V8 L12 12z" fill="#808080"/></symbol>
<symbol id="tk3" viewBox="0 0 16 16"><path d="M1 3h5l1 2h8v9H1z" fill="#e8c040" stroke="#b08820"/><path d="M1 7h14v7H1z" fill="#fae080"/></symbol>
<symbol id="tk4" viewBox="0 0 16 16"><path d="M3 1h8l3 3v11H3z" fill="#fff" stroke="#808080"/><path d="M1 9 Q2 4 8 5 Q12 6 10 9 H4 Q5 12 9 11" fill="none" stroke="#1a78d8" stroke-width="2"/></symbol>
<symbol id="tk5" viewBox="0 0 16 16"><rect x="0.5" y="2.5" width="15" height="11" fill="#f0f0f0" stroke="#606060"/><rect x="2" y="5" width="5" height="6" fill="#c06040"/><path d="M9 6h5M9 8h5M9 10h5" stroke="#404040"/></symbol>
<symbol id="tk6" viewBox="0 0 16 16"><rect x="2" y="1" width="11" height="9" fill="#4a90d0" stroke="#305080"/><rect x="4" y="3" width="7" height="5" fill="#a8e0ff"/><path d="M4 12h8v3H4z" fill="#c0c8d0"/><circle cx="3" cy="5" r="2.5" fill="#e0e8f0"/></symbol>
<symbol id="tk7" viewBox="0 0 16 16"><rect x="2" y="1" width="11" height="9" fill="#4a90d0" stroke="#305080"/><rect x="4" y="3" width="7" height="5" fill="#a8e0ff"/><path d="M4 12h8v3H4z" fill="#c0c8d0"/><circle cx="3" cy="5" r="2.5" fill="#e0e8f0"/></symbol>
<symbol id="tk11" viewBox="0 0 16 16"><path d="M1 3h5l1 2h8v9H1z" fill="#e8c040" stroke="#b08820"/><path d="M1 7h14v7H1z" fill="#fae080"/></symbol>
<symbol id="tk8" viewBox="0 0 16 16"><rect x="0.5" y="3.5" width="15" height="10" fill="#f8e090" stroke="#a08030"/><path d="M1 4 L8 10 L15 4" fill="none" stroke="#a08030"/></symbol>
<symbol id="tk9" viewBox="0 0 16 16" shape-rendering="crispEdges"><path d="M0 0h5v1h-5zM6 0h2v1h-2zM9 0h6v1h-6zM0 1h14v1h-14zM0 2h1v1h-1zM2 2h1v1h-1zM4 2h1v1h-1zM6 2h1v1h-1zM8 2h1v1h-1zM10 2h1v1h-1zM12 2h2v1h-2zM0 3h8v1h-8zM9 3h4v1h-4zM0 4h13v1h-13zM0 5h12v1h-12zM0 6h12v1h-12zM0 7h6v1h-6zM7 7h4v1h-4zM0 8h12v1h-12zM0 9h1v1h-1zM7 9h1v1h-1zM9 9h2v1h-2zM12 9h1v1h-1zM0 10h1v1h-1zM2 10h1v1h-1zM4 10h1v1h-1zM7 10h2v1h-2zM11 10h2v1h-2zM0 11h1v1h-1zM2 11h1v1h-1zM4 11h1v1h-1zM7 11h1v1h-1zM9 11h2v1h-2zM12 11h2v1h-2zM0 12h2v1h-2zM5 12h9v1h-9zM0 13h1v1h-1zM7 13h5v1h-5zM8 14h4v1h-4z" fill="#fff"/><path d="M5 0h1v1h-1zM8 0h1v1h-1zM8 3h1v1h-1z" fill="#404040"/><path d="M15 0h1v1h-1zM14 1h2v1h-2zM14 2h2v1h-2zM13 3h3v1h-3zM13 4h3v1h-3zM12 5h4v1h-4zM12 6h4v1h-4zM6 7h1v1h-1zM11 7h5v1h-5zM12 8h4v1h-4zM1 9h6v1h-6zM8 9h1v1h-1zM11 9h1v1h-1zM13 9h3v1h-3zM1 10h1v1h-1zM3 10h1v1h-1zM5 10h2v1h-2zM9 10h2v1h-2zM13 10h3v1h-3zM1 11h1v1h-1zM3 11h1v1h-1zM5 11h2v1h-2zM8 11h1v1h-1zM11 11h1v1h-1zM14 11h2v1h-2zM2 12h3v1h-3zM14 12h2v1h-2zM1 13h6v1h-6zM12 13h4v1h-4zM0 14h8v1h-8zM12 14h4v1h-4zM0 15h16v1h-16z" fill="#e00000"/><path d="M1 2h1v1h-1zM3 2h1v1h-1zM5 2h1v1h-1zM7 2h1v1h-1zM9 2h1v1h-1zM11 2h1v1h-1z" fill="#d8d8d8"/></symbol>
<symbol id="tk10" viewBox="0 0 16 16"><path d="M3 7h10l-2 8H5z" fill="#c0d8f0" stroke="#6080a0"/><path d="M5 12 L3 1 M8 12 V2 M11 12 L13 1" stroke-width="2" stroke="#e04020"/><path d="M8 12 V4" stroke="#30a030" stroke-width="2"/></symbol>
<symbol id="ql0" viewBox="0 0 16 16"><rect x="1" y="1" width="14" height="14" rx="3" fill="#e8f0ff" stroke="#2050a0"/><path d="M4 8h8" stroke="#2050a0" stroke-width="2"/></symbol>
<symbol id="ql1" viewBox="0 0 16 16"><path d="M2 9 Q2 3 8 3 Q14 3 14 9 H5 Q5 13 9 13 Q12 13 13 11" fill="none" stroke="#1a88e0" stroke-width="2.5"/></symbol>
<symbol id="ql2" viewBox="0 0 16 16"><circle cx="8" cy="8" r="7" fill="#e8741c"/><circle cx="9" cy="7" r="4" fill="#2a5aa8"/></symbol>
<symbol id="ql3" viewBox="0 0 16 16"><rect x="0.5" y="0.5" width="15" height="15" fill="#fff4d8" stroke="#e07a10" stroke-width="1.5"/><circle cx="8" cy="8" r="5" fill="none" stroke="#d08020"/></symbol>
<symbol id="ql4" viewBox="0 0 16 16"><rect x="3" y="1" width="10" height="10" fill="#c8d8f0" stroke="#6080a0"/><path d="M5 12h6v3H5z" fill="#a0b0c0"/></symbol>
<symbol id="ql5" viewBox="0 0 16 16"><rect x="6" y="1" width="5" height="5" fill="#80b0e0"/><rect x="1" y="10" width="5" height="5" fill="#80b0e0"/><rect x="10" y="10" width="5" height="5" fill="#80b0e0"/><path d="M8 6v2M3 10V8h10v2" stroke="#e0c020" fill="none"/></symbol>
<symbol id="ql6" viewBox="0 0 16 16"><rect x="1" y="6" width="14" height="8" fill="#e8c070" stroke="#906020"/><rect x="4" y="1" width="8" height="6" fill="#fff" stroke="#808080"/></symbol>
<symbol id="ql7" viewBox="0 0 16 16"><circle cx="8" cy="8" r="6" fill="none" stroke="#6878a8" stroke-width="3" stroke-dasharray="2 2"/><circle cx="8" cy="8" r="3" fill="#6878a8"/></symbol>
<symbol id="ql8" viewBox="0 0 16 16"><rect x="2" y="2" width="12" height="12" fill="#c0c060" stroke="#606030"/><rect x="5" y="5" width="6" height="6" fill="#f0f0a0"/></symbol>
<symbol id="ql9" viewBox="0 0 16 16"><path d="M3 1h8l3 3v11H3z" fill="#fff" stroke="#808080"/><circle cx="8.5" cy="9" r="3.5" fill="#e8741c"/></symbol>
<symbol id="ql10" viewBox="0 0 16 16"><path d="M2 2 L14 14 M14 2 L2 14" stroke="#d02020" stroke-width="2"/></symbol>
<symbol id="ql11" viewBox="0 0 16 16"><rect x="1" y="1" width="14" height="14" fill="#e02020"/><rect x="3" y="3" width="10" height="6" fill="#fff"/></symbol>
<symbol id="tr_lab" viewBox="0 0 16 16"><rect width="16" height="16" fill="#fff"/><text x="0" y="13" font-size="10" font-weight="bold" fill="#d00" font-family="Liberation Sans">lab</text><rect x="12" y="1" width="2" height="2" fill="#444"/></symbol>
<symbol id="tr_lab2" viewBox="0 0 16 16"><rect width="16" height="16" fill="#fff"/><text x="0" y="13" font-size="10" fill="#444" font-family="Liberation Sans">lab</text></symbol>
<symbol id="tr_mixg" viewBox="0 0 16 16"><rect width="16" height="6" fill="#800000"/><text x="2" y="5.5" font-size="6" font-weight="bold" fill="#fff" font-family="Liberation Sans">mix</text><path d="M0 11 L5 11 L8 8 L10 14 L12 11 H16" stroke="#000" stroke-width="1.5" fill="none"/></symbol>
<symbol id="tr_clock" viewBox="0 0 16 16"><circle cx="8" cy="8" r="7" fill="#fff" stroke="#e08040" stroke-width="1.5"/><path d="M8 3V8l-3 3" stroke="#806040" fill="none"/></symbol>
<symbol id="tr_net" viewBox="0 0 16 16"><rect x="5" y="1" width="9" height="8" fill="#405090" stroke="#202860"/><rect x="1" y="5" width="9" height="8" fill="#405090" stroke="#202860"/><rect x="2" y="13" width="7" height="2" fill="#a0a0c0"/></symbol>
<symbol id="tr_outl" viewBox="0 0 16 16"><rect x="0.5" y="0.5" width="15" height="15" fill="#fff4d8" stroke="#e07a10" stroke-width="1.5"/><circle cx="8" cy="8" r="5" fill="none" stroke="#d08020"/></symbol>
<symbol id="tr_netx" viewBox="0 0 16 16"><rect x="1" y="3" width="8" height="7" fill="#405090"/><path d="M11 2 Q14 6 11 10 M13 1 Q17 6 13 11" stroke="#606060" fill="none"/><path d="M8 9 L15 16 M15 9 L8 16" stroke="#e00" stroke-width="2"/></symbol>
<symbol id="tr_srv" viewBox="0 0 16 16"><rect x="1" y="1" width="8" height="13" fill="#d0d0d0" stroke="#404040"/><circle cx="11" cy="11" r="5" fill="#fff" stroke="#404040"/><path d="M9.5 8.5 L13.5 11 L9.5 13.5z" fill="#20a020"/></symbol>
<symbol id="tr_vol" viewBox="0 0 16 16"><circle cx="7" cy="7" r="6" fill="#606060"/><circle cx="7" cy="7" r="3" fill="#909090"/><circle cx="11" cy="11" r="4.5" fill="#e02020"/><path d="M8.5 11h5" stroke="#fff" stroke-width="1.5"/></symbol>
<symbol id="tr_usb" viewBox="0 0 16 16"><path d="M2 1 Q3 10 8 11 L14 12" stroke="#000" stroke-width="1.5" fill="none"/><rect x="9" y="10" width="6" height="4" fill="#c0c060" stroke="#404040"/></symbol>
<symbol id="tr_msn" viewBox="0 0 16 16"><circle cx="5" cy="5" r="3" fill="#40a040"/><circle cx="9" cy="4" r="3" fill="#3080e0"/><path d="M1 14 Q5 7 9 14z" fill="#40a040"/><circle cx="12" cy="12" r="4" fill="#e02020"/><path d="M10 10 L14 14 M14 10 L10 14" stroke="#fff" stroke-width="1.5"/></symbol>
<symbol id="tr_kav" viewBox="0 0 16 16"><path d="M1 1h3v6l5-6h4l-6 7 5 7h-4l-4-6v6H1z" fill="#e00"/><path d="M9 9 L15 15 M12 15h3v-3" stroke="#000" stroke-width="2" fill="none"/></symbol>
<symbol id="tr_wifi" viewBox="0 0 16 16"><path d="M1 6 Q8 0 15 6 M3 9 Q8 4 13 9 M5 12 Q8 9 11 12" stroke="#fff" stroke-width="1.5" fill="none"/><path d="M1 6 Q8 0 15 6 M3 9 Q8 4 13 9" stroke="#202020" stroke-width="0.6" fill="none"/><path d="M8 9 L15 16 M15 9 L8 16" stroke="#e00" stroke-width="2"/></symbol>
</defs>
</svg>
<svg width="0" height="0" style="position:absolute">
<defs>
<symbol id="q0" viewBox="0 0 16 16"><rect x="1" y="2" width="12" height="13" rx="2" fill="#f0f4ff" stroke="#1a50b0" stroke-width="1.5"/><path d="M4 8 L9 3 L11 5 L6 10z" fill="#2a70d0"/><path d="M6 11h5" stroke="#806020"/><circle cx="14" cy="5" r="1.5" fill="#e06020"/></symbol>
<symbol id="q1" viewBox="0 0 16 16"><path d="M3 9 Q3 4 8 4 Q13 4 13 9 H6 Q6 12 9 12 Q11 12 12 11" fill="none" stroke="#3aa0f0" stroke-width="2.5"/><path d="M1 13 Q6 1 15 2" fill="none" stroke="#1a70c0" stroke-width="1"/></symbol>
<symbol id="q2" viewBox="0 0 16 16"><circle cx="8" cy="8.5" r="7" fill="#e8741c"/><circle cx="9" cy="7" r="4.5" fill="#3a6ab8"/><path d="M1.5 9 Q2 2 8 2.5 Q4 4 5 8 Q6 13 12 12.5 Q8 15.5 3.5 13z" fill="#f8a828"/></symbol>
<symbol id="q3" viewBox="0 0 16 16"><rect x="0.5" y="0.5" width="15" height="15" fill="#fff0c8" stroke="#f08010" stroke-width="1.5"/><circle cx="8" cy="8" r="5" fill="#fff8e0" stroke="#d08020" stroke-width="1.2"/><path d="M8 4.5V8h3" stroke="#d08020" fill="none"/></symbol>
<symbol id="q4" viewBox="0 0 16 16"><rect x="3" y="1" width="9" height="10" fill="#c8e0f8" stroke="#6890c0"/><rect x="4.5" y="2.5" width="6" height="6" fill="#60a8e8"/><path d="M4 12h8v3H4z" fill="#d8e0e8" stroke="#8090a0"/></symbol>
<symbol id="q5" viewBox="0 0 16 16"><rect x="6" y="1" width="5" height="5" fill="#70b0e8" stroke="#3070b0" stroke-width=".6"/><rect x="1" y="10" width="5" height="5" fill="#70b0e8" stroke="#3070b0" stroke-width=".6"/><rect x="10" y="10" width="5" height="5" fill="#70b0e8" stroke="#3070b0" stroke-width=".6"/><path d="M8.5 6v2M3.5 10V8h9v2" stroke="#f0d020" fill="none"/></symbol>
<symbol id="q6" viewBox="0 0 16 16"><rect x="4" y="1" width="8" height="6" fill="#fff" stroke="#708090"/><path d="M1 6h14v8H1z" fill="#f0c860" stroke="#a07020"/><path d="M3 9h10" stroke="#fff" stroke-width="1.5"/></symbol>
<symbol id="q7" viewBox="0 0 16 16"><circle cx="8" cy="8" r="5.5" fill="none" stroke="#7080b8" stroke-width="3"/><circle cx="8" cy="8" r="7" fill="none" stroke="#7080b8" stroke-width="1.5" stroke-dasharray="2 1.6"/></symbol>
<symbol id="q8" viewBox="0 0 16 16"><circle cx="4" cy="5" r="3" fill="#e8f0f8" stroke="#8090a0"/><rect x="6" y="4" width="9" height="7" fill="#60a8e8" stroke="#3060a0"/><path d="M7 12h7v3H7z" fill="#d0d8e0"/></symbol>
<symbol id="q9" viewBox="0 0 16 16"><rect x="1" y="1" width="14" height="14" fill="#a0a890" stroke="#404830"/><rect x="3" y="3" width="6" height="10" fill="#e8e020"/><circle cx="11.5" cy="8" r="2.5" fill="#606860"/></symbol>
<symbol id="q10" viewBox="0 0 16 16"><path d="M2 1h8l4 4v10H2z" fill="#f0f4ff" stroke="#8090b0"/><circle cx="8" cy="9" r="3.5" fill="#e8741c"/><circle cx="8.5" cy="8.5" r="2" fill="#3a6ab8"/></symbol>
<symbol id="q12" viewBox="0 0 16 16"><circle cx="8" cy="8" r="7" fill="#fff" stroke="#e88050" stroke-width="1.5"/><path d="M8 3V8l-3 3M8 8l3-2" stroke="#4060a0" fill="none"/></symbol>
<symbol id="q13" viewBox="0 0 16 16"><path d="M2 2 L14 14 M14 2 L2 14" stroke="#d81818" stroke-width="2.2"/></symbol>
<symbol id="q14" viewBox="0 0 16 16"><rect x="1" y="7" width="14" height="9" fill="#800000"/><path d="M2 4h10l2 2" stroke="#606060" stroke-width="2.5" fill="none"/><rect x="6" y="5" width="3" height="11" fill="#f0e020" stroke="#000" stroke-width=".6"/></symbol>
<symbol id="q15" viewBox="0 0 16 16"><rect x="0" y="0" width="16" height="16" fill="#e81818"/><rect x="0" y="0" width="16" height="7" fill="#fff"/><path d="M1 16 L6 9 L10 12 L16 3 V16z" fill="#fff" opacity=".85"/><text x="2" y="13" font-size="7" font-weight="bold" fill="#e81818" font-family="Liberation Sans">lab</text></symbol>
<symbol id="q16" viewBox="0 0 16 16"><rect x="0" y="0" width="16" height="16" fill="#e81818"/><rect x="2" y="0" width="12" height="6" fill="#fff"/><rect x="4" y="1" width="2" height="2" fill="#333"/><rect x="9" y="1" width="2" height="2" fill="#333"/><path d="M1 16 L6 9 L10 12 L16 3 V16z" fill="#fff"/><text x="1" y="13" font-size="7" font-weight="bold" fill="#e81818" font-family="Liberation Sans">mix</text></symbol>
<symbol id="q17" viewBox="0 0 16 16"><path d="M1 3h9l2 2" stroke="#707070" stroke-width="2.5" fill="none"/><rect x="4" y="4" width="3" height="11" fill="#f0e020" stroke="#000" stroke-width=".6"/><rect x="9" y="8" width="6" height="7" fill="#fff" stroke="#000"/><path d="M11 10v4M13 10v4" stroke="#800080"/></symbol>
<symbol id="q18" viewBox="0 0 16 16"><rect x="3" y="1" width="5" height="7" rx="2" fill="#f0d040" stroke="#a08020"/><rect x="0.5" y="6.5" width="10" height="9" fill="none" stroke="#40c040" stroke-dasharray="1 1"/><path d="M7 15 L15 7 M9 7 L15 15" stroke="#404040" stroke-width="1.5"/></symbol>
<symbol id="q19" viewBox="0 0 16 16"><rect x="1" y="2" width="12" height="10" fill="#404060" stroke="#000"/><circle cx="8" cy="8" r="5" fill="#30a0d0"/><path d="M3 8h10M8 3v10" stroke="#fff" stroke-width=".6"/><path d="M11 11l4 4" stroke="#000" stroke-width="2"/></symbol>
<symbol id="q20" viewBox="0 0 16 16"><circle cx="8" cy="8" r="7" fill="#fff" stroke="#e86020" stroke-width="2"/><path d="M3 4 A7 7 0 0 1 13 3" stroke="#20a040" stroke-width="2" fill="none"/><path d="M13 12 A7 7 0 0 1 3 12" stroke="#2060d0" stroke-width="2" fill="none"/><path d="M6.5 5 L11 8 L6.5 11z" fill="#303030"/></symbol>
<symbol id="q21" viewBox="0 0 16 16"><path d="M1 9 Q4 5 9 6 L15 3 L12 8 Q11 12 6 12 Q2 12 1 9z" fill="#707070"/><circle cx="6" cy="8" r="1" fill="#fff"/></symbol>
<symbol id="q22" viewBox="0 0 16 16"><path d="M4 8h8l-1.5 7h-5z" fill="#d8e8f8" stroke="#7090b0"/><path d="M5 12 L3 1 M8 12 V2 M11 12 L13 1" stroke-width="1.8" stroke="#e85020"/><path d="M8 12 V3" stroke="#30b030" stroke-width="1.8"/><path d="M6.5 12 L6 3" stroke="#f0c020" stroke-width="1.5"/></symbol>
<symbol id="q23" viewBox="0 0 16 16"><rect x="0.5" y="0.5" width="15" height="15" fill="#f0f4ff" stroke="#3050a0"/><text x="1.5" y="13" font-size="11" font-weight="bold" font-style="italic" fill="#2040a0" font-family="Liberation Serif">W</text></symbol>
<symbol id="q24" viewBox="0 0 16 16"><rect x="0.5" y="0.5" width="15" height="15" fill="#f0fff0" stroke="#208040"/><path d="M4 4 L12 12 M12 4 L4 12" stroke="#108030" stroke-width="2.2"/></symbol>
<symbol id="q25" viewBox="0 0 16 16"><path d="M2 2h10v13H2z" fill="#fff" stroke="#6080a0"/><path d="M3 2v-1M5 2v-1M7 2v-1M9 2v-1" stroke="#404040"/><path d="M6 11 L13 3" stroke="#2a80d0" stroke-width="1.8"/></symbol>
<symbol id="q26" viewBox="0 0 16 16"><path d="M2 3 L12 1 L14 13 L4 15z" fill="#90c8f0" stroke="#3070b0"/><path d="M4 2 L5 1 M7 1.5 L8 0.5" stroke="#303030"/></symbol>
<symbol id="q27" viewBox="0 0 16 16"><circle cx="8" cy="8" r="7.5" fill="#fff"/><circle cx="8" cy="8" r="6.5" fill="#c01818"/><path d="M4 12 Q3 7 8 3 Q7 7 10 8 Q12 9 11 12z" fill="#f0a020"/></symbol>
<symbol id="q28" viewBox="0 0 16 16"><rect x="2.5" y="0.5" width="11" height="15" rx="1" fill="#a8c8f0" stroke="#4070b0"/><rect x="4" y="2" width="8" height="3" fill="#e8f4ff"/><path d="M4 7h2M7 7h2M10 7h2M4 9h2M7 9h2M10 9h2M4 11h2M7 11h2M10 11h2M4 13h2M7 13h2M10 13h2" stroke="#2050a0"/></symbol>
</defs>
</svg>
</div></body></html>
